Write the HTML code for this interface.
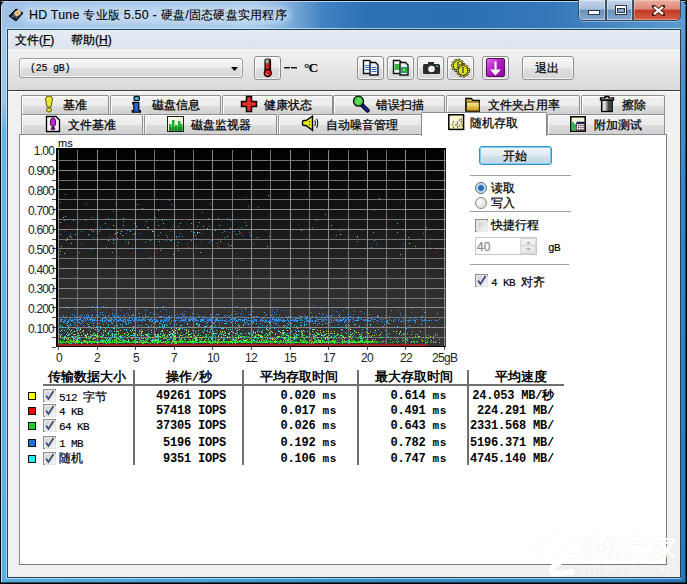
<!DOCTYPE html>
<html><head><meta charset="utf-8"><title>HD Tune</title>
<style>
*{margin:0;padding:0;box-sizing:border-box}
html,body{width:687px;height:584px;overflow:hidden;background:#101820}
body{position:relative;font-family:"Liberation Sans",sans-serif;font-size:12px;color:#000;line-height:1}
.a{position:absolute}
.t{position:absolute;white-space:nowrap;line-height:12px;-webkit-text-stroke:0.25px currentColor}
.btn{position:absolute;border:1px solid #8e8e8e;border-radius:3px;background:linear-gradient(#f6f6f6 0%,#ececec 48%,#dedede 52%,#d6d6d6 100%);box-shadow:inset 0 0 0 1px rgba(255,255,255,.7)}
.tab{position:absolute;border:1px solid #8e8f8f;border-bottom:none;border-radius:2px 2px 0 0;background:linear-gradient(#f2f2f2 0%,#ebebeb 50%,#dddddd 51%,#cfcfcf 100%);box-shadow:inset 1px 1px 0 #fff}
.tt{position:absolute;top:0;white-space:nowrap;font-size:12px;line-height:12px}
.mono{font-family:"Liberation Mono",monospace;-webkit-text-stroke:0}
.num{position:absolute;font-family:"Liberation Mono",monospace;font-weight:bold;font-size:12px;letter-spacing:-0.2px;line-height:12px;white-space:nowrap;text-align:right}
.chk{position:absolute;width:13px;height:13px;border:1px solid #8f8f8f;background:linear-gradient(135deg,#dcdcdc,#fff)}
.chk:after{content:"";position:absolute;left:1px;top:1px;width:9px;height:9px;border:1px solid #e6e6e6;background:linear-gradient(135deg,#cfcfcf,#f8f8f8)}
.sep{position:absolute;height:1px;background:#a0a0a0;box-shadow:0 1px 0 #fff}
</style></head><body>

<!-- window frame -->
<div class="a" style="left:0;top:0;width:687px;height:584px;border-radius:7px 7px 0 0;background:#000"></div>
<div class="a" style="left:1px;top:1px;width:685px;height:582px;border-radius:6px 6px 0 0;background:#4a9ad6;overflow:hidden">
 <div class="a" style="left:0;top:0;width:6px;height:582px;background:linear-gradient(#a8c8e8 0,#9cc4e6 100px,#68b0e4 130px,#5eaee2 100%)"></div>
 <div class="a" style="left:679px;top:0;width:6px;height:582px;background:linear-gradient(#6aa0d0 0,#5a92c8 60px,#3a84c0 200px,#2a78b8 100%)"></div>
 <div class="a" style="left:0;top:576px;width:685px;height:6px;background:linear-gradient(90deg,#58ace0 0,#4aa0d8 30%,#3a90c8 50%,#2a78b8 100%)"></div>
</div>
<!-- title bar colouring -->
<div class="a" style="left:2px;top:2px;width:683px;height:27px;border-radius:5px 5px 0 0;background:linear-gradient(90deg,#a0c2e6 0%,#a8c8ea 37%,#7aaad8 42.5%,#4282c2 47%,#2c72b4 53%,#2a70b2 66%,#3478b8 80%,#5c9ad2 100%)"></div>
<div class="a" style="left:22px;top:6px;width:268px;height:18px;border-radius:9px;background:rgba(215,232,250,.55);filter:blur(3px)"></div>
<div class="a" style="left:1px;top:1px;width:685px;height:1px;border-radius:6px 6px 0 0;background:rgba(255,255,255,.6)"></div>
<div class="a" style="left:1px;top:6px;width:1px;height:577px;background:rgba(200,235,255,.8)"></div>
<div class="a" style="left:1px;top:582px;width:685px;height:1px;background:rgba(0,0,0,.6)"></div>
<div class="a" style="left:685px;top:6px;width:1px;height:577px;background:rgba(0,0,20,.5)"></div>

<!-- client dark border -->
<div class="a" style="left:6px;top:28px;width:675px;height:551px;border:1px solid rgba(200,235,255,.75)"></div>
<div class="a" style="left:7px;top:29px;width:674px;height:549px;background:#25404f"></div>
<div class="a" style="left:8px;top:30px;width:672px;height:547px;background:#f0f0f0"></div>

<!-- app icon -->
<svg class="a" style="left:7px;top:7px" width="18" height="16" viewBox="0 0 18 16">
 <path d="M2 9 L9 2 L16 6 L9 14 Z" fill="#1e2a38" stroke="#0a1018" stroke-width="1"/>
 <ellipse cx="10.5" cy="6.2" rx="3.6" ry="2.6" fill="#f0c890" transform="rotate(-35 10.5 6.2)"/>
 <circle cx="10.5" cy="6.2" r="1" fill="#c08040"/>
 <path d="M5 10 L8 8 L10 11" stroke="#70809a" stroke-width="1.2" fill="none"/>
</svg>
<div class="t" style="left:29px;top:8px;font-size:12.4px;line-height:14px;color:#000;letter-spacing:0.25px;-webkit-text-stroke:0.1px">HD Tune 专业版 5.50 - 硬盘/固态硬盘实用程序</div>

<!-- caption buttons -->
<div class="a" style="left:578px;top:0;width:103px;height:21px;border:1px solid #3a4c60;border-top:none;border-radius:0 0 5px 5px;background:#3a4c60;overflow:hidden;box-shadow:0 1px 0 rgba(255,255,255,.35)">
 <div class="a" style="left:0;top:0;width:27px;height:20px;border-right:1px solid #40566c;background:linear-gradient(#c4d6ea 0%,#a8c0da 45%,#6a90ba 52%,#86aad0 100%);box-shadow:inset 0 0 0 1px rgba(255,255,255,.4)"></div>
 <div class="a" style="left:28px;top:0;width:26px;height:20px;border-right:1px solid #40566c;background:linear-gradient(#c4d6ea 0%,#a8c0da 45%,#6a90ba 52%,#86aad0 100%);box-shadow:inset 0 0 0 1px rgba(255,255,255,.4)"></div>
 <div class="a" style="left:55px;top:0;width:47px;height:20px;background:linear-gradient(#eab0a4 0%,#dc8878 45%,#c43a24 52%,#d4604a 100%);box-shadow:inset 0 0 0 1px rgba(255,220,210,.4)"></div>
 <div class="a" style="left:9px;top:10px;width:12px;height:5px;background:#fff;border:1px solid #2a3a4c"></div>
 <div class="a" style="left:36px;top:5px;width:12px;height:10px;border:1px solid #2a3a4c;background:#fff"></div>
 <div class="a" style="left:38px;top:8px;width:8px;height:5px;border:1px solid #2a3a4c;background:#8aa8c8"></div>
 <svg class="a" style="left:73px;top:5px" width="13" height="11" viewBox="0 0 13 11"><path d="M1.5 1.5 L11.5 9.5 M11.5 1.5 L1.5 9.5" stroke="#4a1a14" stroke-width="4" stroke-linecap="square"/><path d="M2 1.8 L11 9.2 M11 1.8 L2 9.2" stroke="#fff" stroke-width="2.2"/></svg>
</div>

<!-- menu bar -->
<div class="a" style="left:8px;top:30px;width:672px;height:19px;background:linear-gradient(#e6ecf4,#dbe3ee)"></div>
<div class="t" style="left:15px;top:34px">文件(<u>F</u>)</div>
<div class="t" style="left:71px;top:34px">帮助(<u>H</u>)</div>

<!-- toolbar -->
<div class="a" style="left:8px;top:49px;width:672px;height:41px;background:linear-gradient(#f2f2f2,#d9d9d9)"></div>
<div class="a" style="left:8px;top:90px;width:672px;height:1px;background:#3a3a3a"></div>
<div class="a" style="left:8px;top:91px;width:672px;height:1px;background:#fff"></div>

<!-- combo -->
<div class="btn" style="left:19px;top:58px;width:224px;height:20px;border-color:#9c9c9c"></div>
<div class="t mono" style="left:30px;top:63px;font-size:10px;letter-spacing:-0.25px;-webkit-text-stroke:0.15px">(25 gB)</div>
<svg class="a" style="left:231px;top:67px" width="8" height="5"><path d="M0 0H7L3.5 4Z" fill="#000"/></svg>

<!-- thermometer button -->
<div class="btn" style="left:254px;top:56px;width:27px;height:24px"></div>
<svg class="a" style="left:257px;top:57px" width="18" height="22" viewBox="0 0 18 22"><rect x="8" y="2" width="5.5" height="13" rx="1.5" fill="#d82828" stroke="#180000" stroke-width="1.2"/><rect x="8.6" y="2.6" width="4.3" height="3.6" rx="1" fill="#70c8a8"/><rect x="11.6" y="3" width="1.4" height="11" fill="#701010"/><circle cx="10.8" cy="16" r="3.6" fill="#d01818" stroke="#180000" stroke-width="1.2"/><path d="M9.2 16.3q.3 1.2 1.5 1.6" stroke="#fff" stroke-width="1" fill="none"/></svg>
<div class="a" style="left:284px;top:67px;width:6px;height:2px;background:linear-gradient(#111 50%,#8a8a8a 50%)"></div><div class="a" style="left:291px;top:67px;width:6px;height:2px;background:linear-gradient(#111 50%,#8a8a8a 50%)"></div>
<div class="t" style="left:304px;top:60.5px;font-family:'Liberation Serif',serif;font-size:13.5px;line-height:14px;font-weight:bold;letter-spacing:-0.8px;-webkit-text-stroke:0.1px">°C</div>

<!-- toolbar icon buttons -->
<div class="btn" style="left:357px;top:56px;width:27px;height:24px"></div>
<svg class="a" style="left:361px;top:58px" width="20" height="20" viewBox="0 0 20 20">
 <path d="M2.5 2.5h6l2 2v11h-8z" fill="#f4f8ff" stroke="#101018" stroke-width="1.4"/>
 <path d="M4 7.5h5M4 9.5h5M4 11.5h5" stroke="#3a7ad0" stroke-width="1"/>
 <path d="M9 4.5h5.5l2.5 2.5v10h-8z" fill="#e8eefa" stroke="#101018" stroke-width="1.4"/>
 <path d="M10.5 9.5h5M10.5 11.5h5M10.5 13.5h5" stroke="#3a6ac8" stroke-width="1"/>
</svg>
<div class="btn" style="left:387px;top:56px;width:27px;height:24px"></div>
<svg class="a" style="left:391px;top:58px" width="20" height="20" viewBox="0 0 20 20">
 <path d="M2.5 2.5h6l2 2v11h-8z" fill="#f4f8ff" stroke="#101018" stroke-width="1.4"/>
 <rect x="3.5" y="6" width="5" height="6" fill="#30b840"/>
 <path d="M9 4.5h5.5l2.5 2.5v10h-8z" fill="#e8eefa" stroke="#101018" stroke-width="1.4"/>
 <rect x="10" y="9" width="6" height="6" fill="#20a860"/>
 <circle cx="13" cy="12" r="1.2" fill="#a0e020"/>
</svg>
<div class="btn" style="left:417px;top:56px;width:27px;height:24px"></div>
<svg class="a" style="left:422px;top:59px" width="19" height="18" viewBox="0 0 19 18">
 <rect x="1" y="5" width="17" height="10" rx="1.5" fill="#2a2a2a"/>
 <rect x="6" y="3" width="6" height="3" fill="#2a2a2a"/>
 <circle cx="9.5" cy="10" r="3.3" fill="#f0f0f0"/>
 <rect x="14" y="6.5" width="2" height="1.5" fill="#40c080"/>
</svg>
<div class="btn" style="left:447px;top:56px;width:27px;height:24px"></div>
<svg class="a" style="left:450px;top:57px" width="22" height="22" viewBox="0 0 22 22"><circle cx="8" cy="8.5" r="5.2" fill="#1a1a00"/><circle cx="8" cy="8.5" r="5.6" fill="none" stroke="#1a1a00" stroke-width="2.6" stroke-dasharray="2.2 1"/><circle cx="8" cy="8.5" r="5.6" fill="none" stroke="#e4e820" stroke-width="1.3" stroke-dasharray="1.4 1.8" stroke-dashoffset="-.4"/><circle cx="8" cy="8.5" r="4.4" fill="#e0e420"/><circle cx="13" cy="13.5" r="5.2" fill="#1a1a00"/><circle cx="13" cy="13.5" r="5.6" fill="none" stroke="#1a1a00" stroke-width="2.6" stroke-dasharray="2.2 1"/><circle cx="13" cy="13.5" r="5.6" fill="none" stroke="#e4e820" stroke-width="1.3" stroke-dasharray="1.4 1.8" stroke-dashoffset="-.4"/><circle cx="13" cy="13.5" r="4.4" fill="#e0e420"/><path d="M8 5v6M13 10v6" stroke="#404010" stroke-width="2"/><path d="M8 5.5v5M13 10.5v5" stroke="#d0d0b0" stroke-width=".8"/></svg>
<div class="btn" style="left:482px;top:56px;width:27px;height:24px"></div>
<div class="a" style="left:486px;top:58px;width:19px;height:19px;border-radius:2px;background:linear-gradient(135deg,#e070e8 0%,#b020c0 45%,#8a0898 100%);border:1px solid #600868"></div>
<svg class="a" style="left:487px;top:59px" width="17" height="18" viewBox="0 0 17 18"><path d="M8.5 2.5v8" stroke="#fff" stroke-width="2.2"/><path d="M3 10.5h11l-5.5 6z" fill="#fff"/></svg>
<div class="btn" style="left:522px;top:56px;width:52px;height:24px"></div>
<div class="t" style="left:535px;top:62px">退出</div>

<!-- tabs row 1 -->
<div class="tab" style="left:21px;top:95px;width:88px;height:20px"></div>
<div class="tab" style="left:110px;top:95px;width:111px;height:20px"></div>
<div class="tab" style="left:222px;top:95px;width:111px;height:20px"></div>
<div class="tab" style="left:333px;top:95px;width:112px;height:20px"></div>
<div class="tab" style="left:446px;top:95px;width:134px;height:20px"></div>
<div class="tab" style="left:581px;top:95px;width:84px;height:20px"></div>
<div class="t" style="left:63px;top:99px">基准</div>
<div class="t" style="left:152px;top:99px">磁盘信息</div>
<div class="t" style="left:264px;top:99px">健康状态</div>
<div class="t" style="left:376px;top:99px">错误扫描</div>
<div class="t" style="left:488px;top:99px">文件夹占用率</div>
<div class="t" style="left:622px;top:99px">擦除</div>
<!-- row1 icons -->
<svg class="a" style="left:44px;top:96px" width="10" height="17" viewBox="0 0 10 17"><path d="M1.5 3a3.5 3 0 0 1 7 0l-1.5 8h-4z" fill="#e8e830" stroke="#5a5a10"/><ellipse cx="5" cy="14" rx="2.5" ry="2" fill="#e8e830" stroke="#5a5a10"/></svg>
<svg class="a" style="left:131px;top:95px" width="11" height="18" viewBox="0 0 11 18"><rect x="3" y="1.3" width="5.5" height="4.2" rx="1.6" fill="#38b0e0" stroke="#000" stroke-width="1.2"/><path d="M1.8 7.3h6v8.2h1.6v1.6h-8.2v-1.6h1.6v-6.6h-1z" fill="#2a62e0" stroke="#000" stroke-width="1.2"/></svg>
<svg class="a" style="left:240px;top:95px" width="18" height="18" viewBox="0 0 18 18"><path d="M6.5 1.5h5v5h5v5h-5v5h-5v-5h-5v-5h5z" fill="#e82a2a" stroke="#100000" stroke-width="1.5"/></svg>
<svg class="a" style="left:352px;top:95px" width="18" height="18" viewBox="0 0 18 18"><path d="M9.5 9.5l6 6" stroke="#000" stroke-width="4.2" stroke-linecap="round"/><path d="M9.5 9.5l6 6" stroke="#2020b0" stroke-width="2.4" stroke-linecap="round"/><circle cx="6.5" cy="6.2" r="5" fill="#48d048" stroke="#000" stroke-width="1.3"/><path d="M4 7.5l4-4M5.5 9l4-4" stroke="#b0f0b0" stroke-width=".8"/></svg>
<svg class="a" style="left:464px;top:95px" width="18" height="18" viewBox="0 0 18 18"><defs><linearGradient id="fg" x1="0" y1="0" x2="0" y2="1"><stop offset="0" stop-color="#fff0a0"/><stop offset="1" stop-color="#c89810"/></linearGradient></defs><path d="M1.8 3.5h5.5l1.5 1.8h6.5v10.8h-13.5z" fill="#e0b830" stroke="#000" stroke-width="1.3"/><path d="M2.5 7h12.8v9h-12.8z" fill="url(#fg)" stroke="#302000" stroke-width=".8"/></svg>
<svg class="a" style="left:599px;top:95px" width="16" height="18" viewBox="0 0 16 18"><defs><linearGradient id="tg" x1="0" y1="0" x2="1" y2="0"><stop offset="0" stop-color="#808080"/><stop offset=".25" stop-color="#f0f0f0"/><stop offset=".45" stop-color="#a0a0a0"/><stop offset=".72" stop-color="#303030"/><stop offset="1" stop-color="#707070"/></linearGradient></defs><path d="M1.5 2.8h4.5v-1.3h3.8v1.3h4.7v2.4h-13z" fill="#c8c8c8" stroke="#000" stroke-width="1.3"/><rect x="2.6" y="5.2" width="10.6" height="11.3" fill="url(#tg)" stroke="#000" stroke-width="1.3"/></svg>

<!-- tabs row 2 -->
<div class="tab" style="left:21px;top:114px;width:122px;height:21px"></div>
<div class="tab" style="left:144px;top:114px;width:133px;height:21px"></div>
<div class="tab" style="left:278px;top:114px;width:144px;height:21px"></div>
<div class="tab" style="left:547px;top:114px;width:118px;height:21px"></div>
<div class="t" style="left:68px;top:119px">文件基准</div>
<div class="t" style="left:191px;top:119px">磁盘监视器</div>
<div class="t" style="left:326px;top:119px">自动噪音管理</div>
<div class="t" style="left:594px;top:119px">附加测试</div>
<svg class="a" style="left:45px;top:115px" width="16" height="18" viewBox="0 0 16 18"><path d="M1.5 1.5h9.5l3.5 3.5v11.5h-13z" fill="#f4f0f4" stroke="#000" stroke-width="1.3"/><ellipse cx="8" cy="7.3" rx="2.6" ry="4.3" fill="#c420d8" stroke="#200020" stroke-width=".9"/><ellipse cx="8" cy="13.6" rx="1.9" ry="1.2" fill="#9010b0" stroke="#200020" stroke-width=".8"/></svg>
<svg class="a" style="left:167px;top:116px" width="17" height="16" viewBox="0 0 17 16"><defs><linearGradient id="mg" x1="0" y1="0" x2="1" y2="1"><stop offset="0" stop-color="#fff"/><stop offset="1" stop-color="#e8e0b0"/></linearGradient></defs><rect x=".5" y=".5" width="16" height="15" fill="url(#mg)" stroke="#202020"/><path d="M2 15V8h2.5v7zM5 15V4h2.5v11zM8 15V9h2.5v6zM11 15V5h2.5v10zM13.5 15V8h2v7z" fill="#18b030"/><path d="M2 15V11h13.5v4z" fill="#0a8020" opacity=".6"/></svg>
<svg class="a" style="left:301px;top:115px" width="19" height="17" viewBox="0 0 19 17"><path d="M1.5 7Q1.5 5.5 3 5.5L5 5.5L11.5 1.2V15.3L5 10.5L3 10.5Q1.5 10.5 1.5 9Z" fill="#ece828" stroke="#000" stroke-width="1.4"/><path d="M8.5 6.5v1M8.5 9v1" stroke="#000"/><path d="M13.8 5.5Q15.2 8.2 13.8 11M15.8 3.8Q18 8.2 15.8 12.8" stroke="#000" stroke-width="1" fill="none"/></svg>
<svg class="a" style="left:569px;top:115px" width="18" height="18" viewBox="0 0 18 18"><rect x="1.8" y="1.8" width="14.4" height="14.4" fill="#f4f8d8" stroke="#000" stroke-width="1.5"/><path d="M2.5 15.5V7h2.5v2h2.5v6.5z" fill="#30b050"/><rect x="7.5" y="6.8" width="8.2" height="2" fill="#0a0a60"/><rect x="7.5" y="8.8" width="8.2" height="6.8" fill="#f4e8f0" stroke="#000" stroke-width=".6"/><g fill="#503030"><rect x="9" y="10" width="1.2" height="1.2"/><rect x="11.2" y="10" width="1.2" height="1.2"/><rect x="13.4" y="10" width="1.2" height="1.2"/><rect x="9" y="12" width="1.2" height="1.2"/><rect x="11.2" y="12" width="1.2" height="1.2"/><rect x="13.4" y="12" width="1.2" height="1.2"/><rect x="9" y="14" width="1.2" height="1.2"/><rect x="11.2" y="14" width="1.2" height="1.2"/><rect x="13.4" y="14" width="1.2" height="1.2"/></g></svg>

<!-- panel -->
<div class="a" style="left:19px;top:134px;width:648px;height:431px;background:#fff;border:1px solid #898c95;border-right-color:#7a7a7a;border-bottom-color:#7a7a7a"></div>

<!-- selected tab -->
<div class="a" style="left:421px;top:112px;width:126px;height:24px;background:#fff;border:1px solid #898c95;border-bottom:none;border-radius:2px 2px 0 0"></div>
<svg class="a" style="left:447px;top:113px" width="18" height="18" viewBox="0 0 18 18"><defs><linearGradient id="yg" x1="0" y1="0" x2="1" y2="1"><stop offset="0" stop-color="#fffce8"/><stop offset="1" stop-color="#f4f0a8"/></linearGradient></defs><rect x="1.8" y="1.8" width="14.8" height="14.6" fill="url(#yg)" stroke="#000" stroke-width="1.5"/><g fill="#303080"><circle cx="6.5" cy="9" r=".8"/><circle cx="9" cy="12" r=".8"/><circle cx="12.5" cy="7" r=".8"/><circle cx="14.5" cy="8.5" r=".8"/></g><g fill="#705020"><circle cx="5.5" cy="11.5" r=".8"/><circle cx="6.5" cy="14" r=".8"/><circle cx="10.5" cy="9" r=".8"/><circle cx="10.5" cy="11" r=".8"/><circle cx="10.5" cy="14" r=".8"/><circle cx="12.5" cy="13" r=".8"/><circle cx="14.5" cy="11" r=".8"/><circle cx="15.5" cy="13" r=".8"/><circle cx="14.5" cy="6" r=".8"/></g></svg>
<div class="t" style="left:470px;top:117px">随机存取</div>

<!-- chart -->
<svg class="a" style="left:0;top:0" width="687" height="584"><defs><linearGradient id="cg" x1="0" y1="0" x2="0" y2="1"><stop offset="0" stop-color="#000"/><stop offset="0.12" stop-color="#060606"/><stop offset="0.7" stop-color="#2e2e2e"/><stop offset="1" stop-color="#383838"/></linearGradient></defs><rect x="56" y="148" width="390" height="199" fill="url(#cg)"/><path stroke="#747474" stroke-width="1" fill="none" d="M77.5 150 V347 M116.5 150 V347 M154.5 150 V347 M193.5 150 V347 M232.5 150 V347 M270.5 150 V347 M309.5 150 V347 M348.5 150 V347 M386.5 150 V347 M425.5 150 V347 M56 337.5 H446 M56 317.5 H446 M56 298.5 H446 M56 278.5 H446 M56 258.5 H446 M56 239.5 H446 M56 219.5 H446 M56 199.5 H446 M56 180.5 H446 M56 160.5 H446"/><path stroke="#8a8a8a" stroke-width="1" fill="none" d="M58.5 150 V347 M97.5 150 V347 M135.5 150 V347 M174.5 150 V347 M212.5 150 V347 M251.5 150 V347 M290.5 150 V347 M328.5 150 V347 M367.5 150 V347 M405.5 150 V347 M444.5 150 V347 M56 327.5 H446 M56 307.5 H446 M56 288.5 H446 M56 268.5 H446 M56 248.5 H446 M56 229.5 H446 M56 209.5 H446 M56 189.5 H446 M56 170.5 H446"/><path stroke="#404a60" stroke-width="1" fill="none" d="M52 347.5 H56 M52 337.5 H56 M52 327.5 H56 M52 317.5 H56 M52 307.5 H56 M52 298.5 H56 M52 288.5 H56 M52 278.5 H56 M52 268.5 H56 M52 258.5 H56 M52 248.5 H56 M52 239.5 H56 M52 229.5 H56 M52 219.5 H56 M52 209.5 H56 M52 199.5 H56 M52 189.5 H56 M52 180.5 H56 M52 170.5 H56 M52 160.5 H56"/><path stroke="#505050" stroke-width="1" fill="none" d="M58.5 347 V350 M97.5 347 V350 M135.5 347 V350 M174.5 347 V350 M212.5 347 V350 M251.5 347 V350 M290.5 347 V350 M328.5 347 V350 M367.5 347 V350 M405.5 347 V350 M444.5 347 V350"/><path fill="#2a8ce0" d="M182 236h1v1h-1zM81 231h1v1h-1zM210 203h1v1h-1zM232 223h1v1h-1zM167 237h1v1h-1zM234 231h1v1h-1zM153 231h1v1h-1zM230 220h1v1h-1zM126 233h1v1h-1zM208 218h1v1h-1zM374 210h1v1h-1zM145 242h1v1h-1zM241 227h1v1h-1zM123 221h1v1h-1zM224 231h1v1h-1zM150 240h1v1h-1zM258 207h1v1h-1zM239 231h1v1h-1zM142 248h1v1h-1zM376 244h1v1h-1zM429 242h1v1h-1zM108 218h1v1h-1zM86 203h1v1h-1zM100 227h1v1h-1zM249 232h1v1h-1zM191 231h1v1h-1zM151 239h1v1h-1zM250 235h1v1h-1zM211 240h1v1h-1zM70 234h1v1h-1zM336 235h1v1h-1zM169 200h1v1h-1zM113 211h1v1h-1zM174 234h1v1h-1zM222 229h1v1h-1zM160 232h1v1h-1zM412 229h1v1h-1zM172 226h1v1h-1zM248 206h1v1h-1zM157 221h1v1h-1zM211 248h1v1h-1zM59 254h1v1h-1zM269 236h1v1h-1zM174 234h1v1h-1zM85 220h1v1h-1zM171 240h1v1h-1zM129 230h1v1h-1zM201 233h1v1h-1zM423 233h1v1h-1zM194 229h1v1h-1zM70 258h1v1h-1zM180 233h1v1h-1zM134 223h1v1h-1zM229 246h1v1h-1zM312 227h1v1h-1zM209 226h1v1h-1zM99 231h1v1h-1zM129 229h1v1h-1zM93 237h1v1h-1zM217 243h1v1h-1zM405 241h1v1h-1zM166 240h1v1h-1zM242 235h1v1h-1zM374 240h1v1h-1zM127 230h1v1h-1zM227 218h1v1h-1zM253 243h1v1h-1zM138 248h1v1h-1zM196 246h1v1h-1zM196 238h1v1h-1zM109 237h1v1h-1zM136 239h1v1h-1zM228 244h1v1h-1zM403 244h1v1h-1zM125 241h1v1h-1zM426 227h1v1h-1zM158 235h1v1h-1zM176 237h1v1h-1zM69 236h1v1h-1zM339 230h1v1h-1zM398 219h1v1h-1zM191 240h1v1h-1zM371 247h1v1h-1zM140 233h1v1h-1zM107 228h1v1h-1zM117 238h1v1h-1zM224 237h1v1h-1zM249 239h1v1h-1zM222 232h1v1h-1zM128 241h1v1h-1zM105 219h1v1h-1zM171 204h1v1h-1zM202 212h1v1h-1zM64 220h1v1h-1zM113 238h1v1h-1zM159 229h1v1h-1zM239 233h1v1h-1zM162 220h1v1h-1zM357 237h1v1h-1zM318 239h1v1h-1zM60 202h1v1h-1zM91 249h1v1h-1zM89 235h1v1h-1zM81 243h1v1h-1zM170 219h1v1h-1zM176 236h1v1h-1zM163 228h1v1h-1zM92 217h1v1h-1z"/><path fill="#30c8e0" d="M93 231h1v1h-1zM113 240h1v1h-1zM178 242h1v1h-1zM178 226h1v1h-1zM60 222h1v1h-1zM197 226h1v1h-1zM197 233h1v1h-1zM209 242h1v1h-1zM268 195h1v1h-1zM219 225h1v1h-1zM227 236h1v1h-1zM180 223h1v1h-1zM325 214h1v1h-1zM154 235h1v1h-1zM194 232h1v1h-1zM207 228h1v1h-1zM75 234h1v1h-1zM60 234h1v1h-1zM88 234h1v1h-1zM63 217h1v1h-1zM230 228h1v1h-1zM147 227h1v1h-1zM379 198h1v1h-1zM67 239h1v1h-1zM67 238h1v1h-1zM71 243h1v1h-1zM91 230h1v1h-1zM199 232h1v1h-1zM136 226h1v1h-1zM97 217h1v1h-1zM134 233h1v1h-1zM120 233h1v1h-1zM105 223h1v1h-1zM73 220h1v1h-1zM148 227h1v1h-1zM408 237h1v1h-1zM123 225h1v1h-1zM195 235h1v1h-1zM159 241h1v1h-1zM331 225h1v1h-1zM113 219h1v1h-1zM97 233h1v1h-1zM66 240h1v1h-1zM199 222h1v1h-1zM301 230h1v1h-1zM397 232h1v1h-1zM203 226h1v1h-1zM191 223h1v1h-1zM123 218h1v1h-1zM257 237h1v1h-1zM71 237h1v1h-1zM97 231h1v1h-1zM215 230h1v1h-1zM163 223h1v1h-1zM193 233h1v1h-1zM152 231h1v1h-1zM357 236h1v1h-1zM117 232h1v1h-1zM378 239h1v1h-1zM218 218h1v1h-1zM170 240h1v1h-1zM179 236h1v1h-1zM65 216h1v1h-1zM130 231h1v1h-1zM236 234h1v1h-1z"/><path fill="#c0c040" d="M267 246h1v1h-1zM200 252h1v1h-1zM178 250h1v1h-1zM231 245h1v1h-1zM60 251h1v1h-1zM231 245h1v1h-1zM61 246h1v1h-1zM400 254h1v1h-1zM64 253h1v1h-1z"/><path fill="#d0d040" d="M152 231h1v1h-1zM108 240h1v1h-1zM121 231h1v1h-1zM122 235h1v1h-1zM113 225h1v1h-1zM409 243h1v1h-1zM158 210h1v1h-1zM340 234h1v1h-1zM115 233h1v1h-1zM220 241h1v1h-1zM197 232h1v1h-1zM128 243h1v1h-1z"/><path fill="#a03030" d="M432 248h1v1h-1zM217 246h1v1h-1zM84 260h1v1h-1zM115 203h1v1h-1zM236 253h1v1h-1zM265 230h1v1h-1zM184 219h1v1h-1zM229 232h1v1h-1zM241 232h1v1h-1zM157 252h1v1h-1zM400 201h1v1h-1zM188 247h1v1h-1zM84 245h1v1h-1zM65 231h1v1h-1zM77 249h1v1h-1zM132 252h1v1h-1zM187 244h1v1h-1zM106 247h1v1h-1zM144 225h1v1h-1zM240 233h1v1h-1zM134 234h1v1h-1zM114 234h1v1h-1zM156 249h1v1h-1zM68 226h1v1h-1zM436 252h1v1h-1zM170 231h1v1h-1zM200 241h1v1h-1zM245 197h1v1h-1zM219 247h1v1h-1zM132 234h1v1h-1zM119 256h1v1h-1zM342 231h1v1h-1zM355 236h1v1h-1zM194 248h1v1h-1zM97 235h1v1h-1zM69 243h1v1h-1zM174 238h1v1h-1zM97 246h1v1h-1zM218 238h1v1h-1z"/><path fill="#40c060" d="M316 220h1v1h-1zM158 225h1v1h-1zM357 241h1v1h-1zM150 240h1v1h-1zM65 194h1v1h-1zM415 246h1v1h-1zM112 252h1v1h-1zM241 260h1v1h-1zM100 248h1v1h-1zM373 232h1v1h-1zM113 243h1v1h-1zM160 250h1v1h-1zM150 257h1v1h-1zM137 204h1v1h-1zM70 236h1v1h-1zM146 221h1v1h-1zM245 222h1v1h-1zM142 208h1v1h-1zM246 225h1v1h-1zM173 254h1v1h-1zM79 252h1v1h-1zM155 217h1v1h-1zM166 235h1v1h-1zM397 223h1v1h-1z"/><path fill="#30c0d0" d="M177 245h1v1h-1zM154 256h1v1h-1zM91 248h1v1h-1z"/><path fill="#2890e0" d="M240 320h1v1h-1zM358 319h1v1h-1zM80 315h1v1h-1zM231 317h1v1h-1zM299 315h1v1h-1zM104 318h1v1h-1zM96 326h1v1h-1zM113 320h1v1h-1zM253 316h1v1h-1zM322 307h1v1h-1zM215 320h1v1h-1zM153 326h1v1h-1zM105 320h1v1h-1zM66 316h1v1h-1zM192 320h1v1h-1zM355 320h1v1h-1zM381 318h1v1h-1zM72 320h1v1h-1zM224 320h1v1h-1zM191 318h1v1h-1zM278 319h1v1h-1zM378 318h1v1h-1zM63 322h1v1h-1zM257 316h1v1h-1zM112 319h1v1h-1zM305 316h1v1h-1zM156 320h1v1h-1zM244 316h1v1h-1zM373 319h1v1h-1zM128 314h1v1h-1zM175 320h1v1h-1zM210 320h1v1h-1zM306 317h1v1h-1zM125 320h1v1h-1zM251 319h1v1h-1zM84 318h1v1h-1zM274 321h1v1h-1zM166 318h1v1h-1zM245 309h1v1h-1zM314 321h1v1h-1zM102 320h1v1h-1zM245 319h1v1h-1zM97 322h1v1h-1zM203 320h1v1h-1zM247 322h1v1h-1zM203 318h1v1h-1zM295 320h1v1h-1zM273 323h1v1h-1zM365 320h1v1h-1zM370 320h1v1h-1zM364 313h1v1h-1zM270 318h1v1h-1zM323 319h1v1h-1zM139 318h1v1h-1zM278 319h1v1h-1zM192 319h1v1h-1zM250 317h1v1h-1zM228 320h1v1h-1zM333 317h1v1h-1zM87 314h1v1h-1zM378 321h1v1h-1zM86 318h1v1h-1zM139 319h1v1h-1zM391 320h1v1h-1zM139 319h1v1h-1zM141 320h1v1h-1zM365 324h1v1h-1zM337 320h1v1h-1zM161 319h1v1h-1zM266 314h1v1h-1zM405 319h1v1h-1zM194 321h1v1h-1zM86 315h1v1h-1zM117 321h1v1h-1zM276 319h1v1h-1zM386 320h1v1h-1zM294 321h1v1h-1zM411 312h1v1h-1zM129 316h1v1h-1zM175 321h1v1h-1zM135 317h1v1h-1zM78 320h1v1h-1zM248 318h1v1h-1zM217 320h1v1h-1zM174 320h1v1h-1zM328 320h1v1h-1zM301 318h1v1h-1zM315 320h1v1h-1zM283 310h1v1h-1zM343 318h1v1h-1zM208 319h1v1h-1zM373 321h1v1h-1zM311 321h1v1h-1zM90 319h1v1h-1zM104 320h1v1h-1zM185 320h1v1h-1zM232 320h1v1h-1zM72 321h1v1h-1zM114 316h1v1h-1zM246 321h1v1h-1zM135 320h1v1h-1zM355 317h1v1h-1zM163 316h1v1h-1zM383 319h1v1h-1zM354 311h1v1h-1zM330 322h1v1h-1zM292 320h1v1h-1zM196 319h1v1h-1zM143 318h1v1h-1zM145 310h1v1h-1zM333 318h1v1h-1zM271 317h1v1h-1zM244 321h1v1h-1zM136 309h1v1h-1zM95 317h1v1h-1zM93 320h1v1h-1zM127 320h1v1h-1zM227 315h1v1h-1zM261 320h1v1h-1zM308 320h1v1h-1zM334 317h1v1h-1zM70 319h1v1h-1zM242 320h1v1h-1zM358 317h1v1h-1zM307 320h1v1h-1zM141 320h1v1h-1zM149 321h1v1h-1zM307 320h1v1h-1zM401 320h1v1h-1zM107 319h1v1h-1zM300 323h1v1h-1zM283 321h1v1h-1zM238 320h1v1h-1zM185 319h1v1h-1zM93 318h1v1h-1zM345 320h1v1h-1zM414 317h1v1h-1zM293 319h1v1h-1zM108 321h1v1h-1zM210 319h1v1h-1zM234 319h1v1h-1zM230 318h1v1h-1zM83 321h1v1h-1zM369 314h1v1h-1zM310 320h1v1h-1zM290 320h1v1h-1zM371 319h1v1h-1zM234 311h1v1h-1zM422 316h1v1h-1zM222 318h1v1h-1zM113 314h1v1h-1zM218 320h1v1h-1zM297 320h1v1h-1zM103 315h1v1h-1zM91 321h1v1h-1zM328 320h1v1h-1zM141 325h1v1h-1zM242 320h1v1h-1zM178 320h1v1h-1zM273 317h1v1h-1zM345 320h1v1h-1zM317 319h1v1h-1zM101 320h1v1h-1zM97 317h1v1h-1zM102 321h1v1h-1zM123 321h1v1h-1zM266 326h1v1h-1zM242 321h1v1h-1zM189 320h1v1h-1zM75 322h1v1h-1zM135 322h1v1h-1zM199 316h1v1h-1zM393 321h1v1h-1zM196 320h1v1h-1zM369 321h1v1h-1zM331 321h1v1h-1zM78 319h1v1h-1zM226 319h1v1h-1zM323 320h1v1h-1zM234 318h1v1h-1zM358 320h1v1h-1zM276 320h1v1h-1zM91 321h1v1h-1zM113 321h1v1h-1zM77 320h1v1h-1zM329 325h1v1h-1zM251 319h1v1h-1zM169 321h1v1h-1zM188 320h1v1h-1zM110 320h1v1h-1zM208 321h1v1h-1zM241 316h1v1h-1zM120 310h1v1h-1zM287 318h1v1h-1zM77 316h1v1h-1zM280 320h1v1h-1zM103 306h1v1h-1zM421 319h1v1h-1zM244 320h1v1h-1zM401 320h1v1h-1zM382 321h1v1h-1zM230 322h1v1h-1zM176 317h1v1h-1zM117 320h1v1h-1zM182 320h1v1h-1zM295 320h1v1h-1zM173 320h1v1h-1zM416 319h1v1h-1zM336 319h1v1h-1zM154 319h1v1h-1zM221 320h1v1h-1zM255 320h1v1h-1zM131 315h1v1h-1zM365 320h1v1h-1zM173 320h1v1h-1zM65 321h1v1h-1zM164 319h1v1h-1zM104 320h1v1h-1zM277 321h1v1h-1zM256 320h1v1h-1zM129 317h1v1h-1zM415 317h1v1h-1zM156 320h1v1h-1zM228 316h1v1h-1zM212 319h1v1h-1zM403 322h1v1h-1zM318 319h1v1h-1zM254 319h1v1h-1zM139 313h1v1h-1zM132 317h1v1h-1zM156 321h1v1h-1zM357 318h1v1h-1zM91 319h1v1h-1zM153 319h1v1h-1zM288 321h1v1h-1zM350 319h1v1h-1zM66 319h1v1h-1zM188 320h1v1h-1zM395 321h1v1h-1zM230 319h1v1h-1zM298 318h1v1h-1zM60 321h1v1h-1zM319 319h1v1h-1zM271 321h1v1h-1zM238 319h1v1h-1zM283 319h1v1h-1zM98 316h1v1h-1zM155 321h1v1h-1zM285 320h1v1h-1zM230 320h1v1h-1zM415 321h1v1h-1zM331 320h1v1h-1zM168 317h1v1h-1zM225 323h1v1h-1zM342 319h1v1h-1zM342 320h1v1h-1zM373 321h1v1h-1zM414 320h1v1h-1zM142 320h1v1h-1zM243 317h1v1h-1zM196 320h1v1h-1zM165 319h1v1h-1zM328 306h1v1h-1zM428 320h1v1h-1zM278 321h1v1h-1zM401 321h1v1h-1zM237 316h1v1h-1zM109 320h1v1h-1zM85 321h1v1h-1zM239 325h1v1h-1zM148 316h1v1h-1zM102 317h1v1h-1zM235 318h1v1h-1zM281 320h1v1h-1zM150 320h1v1h-1zM153 314h1v1h-1zM161 320h1v1h-1zM171 321h1v1h-1zM316 320h1v1h-1zM248 320h1v1h-1zM164 321h1v1h-1zM169 321h1v1h-1zM207 322h1v1h-1zM108 320h1v1h-1zM384 321h1v1h-1zM327 323h1v1h-1zM219 320h1v1h-1zM235 314h1v1h-1zM340 321h1v1h-1zM103 318h1v1h-1zM387 322h1v1h-1zM68 308h1v1h-1zM295 319h1v1h-1zM136 319h1v1h-1zM219 320h1v1h-1zM158 307h1v1h-1zM261 320h1v1h-1zM352 321h1v1h-1zM256 320h1v1h-1zM63 316h1v1h-1zM345 320h1v1h-1zM186 321h1v1h-1zM120 318h1v1h-1zM326 320h1v1h-1zM312 320h1v1h-1zM358 318h1v1h-1zM160 320h1v1h-1zM345 321h1v1h-1zM170 318h1v1h-1zM168 319h1v1h-1zM106 308h1v1h-1zM287 317h1v1h-1zM281 318h1v1h-1zM104 321h1v1h-1zM235 319h1v1h-1zM365 320h1v1h-1zM346 319h1v1h-1zM295 327h1v1h-1zM131 318h1v1h-1zM365 324h1v1h-1zM385 315h1v1h-1z"/><path fill="#3a8cf0" d="M197 320h1v1h-1zM155 319h1v1h-1zM128 320h1v1h-1zM182 321h1v1h-1zM398 310h1v1h-1zM412 308h1v1h-1zM113 320h1v1h-1zM226 321h1v1h-1zM118 320h1v1h-1zM224 320h1v1h-1zM337 321h1v1h-1zM182 316h1v1h-1zM91 318h1v1h-1zM161 321h1v1h-1zM280 320h1v1h-1zM259 321h1v1h-1zM151 318h1v1h-1zM69 319h1v1h-1zM166 310h1v1h-1zM193 319h1v1h-1zM330 319h1v1h-1zM223 320h1v1h-1zM217 314h1v1h-1zM252 321h1v1h-1zM125 321h1v1h-1zM266 321h1v1h-1zM324 318h1v1h-1zM186 318h1v1h-1zM287 319h1v1h-1zM298 318h1v1h-1zM343 319h1v1h-1zM171 315h1v1h-1zM274 319h1v1h-1zM93 320h1v1h-1zM398 320h1v1h-1zM275 320h1v1h-1zM291 316h1v1h-1zM173 327h1v1h-1zM143 318h1v1h-1zM210 320h1v1h-1zM111 320h1v1h-1zM328 314h1v1h-1zM244 320h1v1h-1zM145 314h1v1h-1zM174 321h1v1h-1zM80 318h1v1h-1zM220 317h1v1h-1zM97 324h1v1h-1zM81 316h1v1h-1zM157 314h1v1h-1zM422 320h1v1h-1zM116 321h1v1h-1zM104 320h1v1h-1zM423 309h1v1h-1zM211 320h1v1h-1zM333 321h1v1h-1zM439 319h1v1h-1zM323 320h1v1h-1zM61 321h1v1h-1zM290 320h1v1h-1zM110 321h1v1h-1zM72 319h1v1h-1zM77 320h1v1h-1zM216 319h1v1h-1zM109 321h1v1h-1zM328 320h1v1h-1zM135 321h1v1h-1zM112 309h1v1h-1zM78 320h1v1h-1zM74 321h1v1h-1zM263 320h1v1h-1zM275 319h1v1h-1zM64 320h1v1h-1zM358 316h1v1h-1zM116 319h1v1h-1zM215 319h1v1h-1zM130 320h1v1h-1zM399 319h1v1h-1zM207 325h1v1h-1zM316 318h1v1h-1zM182 319h1v1h-1zM193 320h1v1h-1zM211 321h1v1h-1zM84 317h1v1h-1zM277 310h1v1h-1zM101 319h1v1h-1zM131 320h1v1h-1zM166 320h1v1h-1zM360 318h1v1h-1zM138 319h1v1h-1zM296 320h1v1h-1zM61 320h1v1h-1zM349 317h1v1h-1zM232 319h1v1h-1zM381 321h1v1h-1zM188 320h1v1h-1zM331 319h1v1h-1zM322 319h1v1h-1zM189 319h1v1h-1zM387 321h1v1h-1zM119 318h1v1h-1zM307 320h1v1h-1zM415 318h1v1h-1zM122 326h1v1h-1zM237 316h1v1h-1zM81 320h1v1h-1zM304 321h1v1h-1zM341 320h1v1h-1zM281 320h1v1h-1zM135 320h1v1h-1zM71 320h1v1h-1zM163 306h1v1h-1zM280 320h1v1h-1zM220 317h1v1h-1zM132 315h1v1h-1zM326 315h1v1h-1zM315 321h1v1h-1zM423 320h1v1h-1zM178 318h1v1h-1zM209 318h1v1h-1zM70 325h1v1h-1zM60 320h1v1h-1zM66 306h1v1h-1zM147 319h1v1h-1zM92 315h1v1h-1zM225 316h1v1h-1zM92 320h1v1h-1zM145 318h1v1h-1zM124 319h1v1h-1zM347 318h1v1h-1zM370 320h1v1h-1zM190 308h1v1h-1zM217 319h1v1h-1zM308 320h1v1h-1zM313 305h1v1h-1zM331 320h1v1h-1zM79 316h1v1h-1zM344 321h1v1h-1zM194 321h1v1h-1zM132 319h1v1h-1zM238 319h1v1h-1zM295 318h1v1h-1zM67 321h1v1h-1zM410 318h1v1h-1zM182 320h1v1h-1zM231 319h1v1h-1zM380 319h1v1h-1zM276 318h1v1h-1zM179 321h1v1h-1zM321 318h1v1h-1zM376 320h1v1h-1zM304 319h1v1h-1zM120 319h1v1h-1zM270 317h1v1h-1zM280 319h1v1h-1zM242 319h1v1h-1zM196 320h1v1h-1zM192 317h1v1h-1zM307 316h1v1h-1zM195 320h1v1h-1zM231 314h1v1h-1zM248 314h1v1h-1zM167 321h1v1h-1zM85 319h1v1h-1zM107 320h1v1h-1zM133 320h1v1h-1zM232 320h1v1h-1zM365 319h1v1h-1zM219 323h1v1h-1zM193 315h1v1h-1zM185 318h1v1h-1zM435 320h1v1h-1zM287 323h1v1h-1zM177 314h1v1h-1zM102 319h1v1h-1zM318 321h1v1h-1zM84 320h1v1h-1zM326 317h1v1h-1zM176 320h1v1h-1zM314 321h1v1h-1zM89 318h1v1h-1zM145 315h1v1h-1zM142 316h1v1h-1zM211 318h1v1h-1zM258 317h1v1h-1zM174 321h1v1h-1zM131 320h1v1h-1zM180 320h1v1h-1zM97 306h1v1h-1zM416 319h1v1h-1zM81 323h1v1h-1zM163 309h1v1h-1zM157 320h1v1h-1zM238 320h1v1h-1zM67 321h1v1h-1zM349 320h1v1h-1zM175 321h1v1h-1zM201 321h1v1h-1zM156 319h1v1h-1zM387 320h1v1h-1zM211 319h1v1h-1zM212 320h1v1h-1zM378 316h1v1h-1zM160 320h1v1h-1zM123 316h1v1h-1zM90 307h1v1h-1zM94 319h1v1h-1zM68 320h1v1h-1zM230 315h1v1h-1zM367 319h1v1h-1zM98 316h1v1h-1zM437 320h1v1h-1zM115 318h1v1h-1zM70 318h1v1h-1zM343 310h1v1h-1zM280 319h1v1h-1zM431 320h1v1h-1zM175 320h1v1h-1zM227 321h1v1h-1zM331 315h1v1h-1zM209 319h1v1h-1zM137 321h1v1h-1zM349 320h1v1h-1zM302 320h1v1h-1zM397 318h1v1h-1zM301 319h1v1h-1zM189 321h1v1h-1zM279 315h1v1h-1zM309 320h1v1h-1zM148 319h1v1h-1zM201 319h1v1h-1zM192 318h1v1h-1zM137 321h1v1h-1zM260 320h1v1h-1zM213 318h1v1h-1zM276 324h1v1h-1zM111 320h1v1h-1zM106 319h1v1h-1zM348 319h1v1h-1zM113 320h1v1h-1zM156 320h1v1h-1zM220 320h1v1h-1zM96 320h1v1h-1zM189 321h1v1h-1zM272 321h1v1h-1zM326 319h1v1h-1zM324 317h1v1h-1zM119 319h1v1h-1zM109 320h1v1h-1zM413 320h1v1h-1zM174 320h1v1h-1zM87 319h1v1h-1zM286 316h1v1h-1zM189 321h1v1h-1zM60 317h1v1h-1zM86 316h1v1h-1zM90 319h1v1h-1zM143 318h1v1h-1zM212 316h1v1h-1zM136 318h1v1h-1zM161 316h1v1h-1zM323 320h1v1h-1zM134 319h1v1h-1zM337 320h1v1h-1zM306 318h1v1h-1zM338 324h1v1h-1zM61 320h1v1h-1zM309 318h1v1h-1zM105 316h1v1h-1zM204 316h1v1h-1zM121 320h1v1h-1zM247 320h1v1h-1zM274 312h1v1h-1zM141 320h1v1h-1zM181 317h1v1h-1zM404 320h1v1h-1zM162 325h1v1h-1zM361 319h1v1h-1zM107 317h1v1h-1zM210 317h1v1h-1zM122 320h1v1h-1zM88 315h1v1h-1zM187 317h1v1h-1zM190 319h1v1h-1zM392 317h1v1h-1zM89 319h1v1h-1zM246 318h1v1h-1zM234 320h1v1h-1zM307 318h1v1h-1zM333 320h1v1h-1zM133 320h1v1h-1zM332 310h1v1h-1zM389 320h1v1h-1zM371 321h1v1h-1zM212 320h1v1h-1zM129 320h1v1h-1zM200 319h1v1h-1zM374 319h1v1h-1zM307 317h1v1h-1zM269 321h1v1h-1zM213 317h1v1h-1zM421 321h1v1h-1zM413 319h1v1h-1zM265 319h1v1h-1zM197 320h1v1h-1zM125 318h1v1h-1zM176 318h1v1h-1zM159 316h1v1h-1zM366 320h1v1h-1zM124 315h1v1h-1zM123 320h1v1h-1zM92 314h1v1h-1zM184 320h1v1h-1zM157 320h1v1h-1zM252 320h1v1h-1zM365 319h1v1h-1zM236 313h1v1h-1zM256 316h1v1h-1zM216 318h1v1h-1zM150 319h1v1h-1zM166 319h1v1h-1zM315 320h1v1h-1zM82 314h1v1h-1zM283 319h1v1h-1zM233 318h1v1h-1zM125 320h1v1h-1zM144 320h1v1h-1zM154 320h1v1h-1zM78 320h1v1h-1zM294 317h1v1h-1zM139 320h1v1h-1zM363 319h1v1h-1zM62 319h1v1h-1zM426 320h1v1h-1zM144 319h1v1h-1zM307 318h1v1h-1zM213 318h1v1h-1zM368 320h1v1h-1zM301 322h1v1h-1zM309 320h1v1h-1zM102 318h1v1h-1zM330 317h1v1h-1zM88 316h1v1h-1zM81 321h1v1h-1z"/><path fill="#40a0f0" d="M152 320h1v1h-1zM165 320h1v1h-1zM203 321h1v1h-1zM328 320h1v1h-1zM377 316h1v1h-1zM283 319h1v1h-1zM278 319h1v1h-1zM105 318h1v1h-1zM145 317h1v1h-1zM343 307h1v1h-1zM331 316h1v1h-1zM234 319h1v1h-1zM370 320h1v1h-1zM371 318h1v1h-1zM216 320h1v1h-1zM218 314h1v1h-1zM168 320h1v1h-1zM129 320h1v1h-1zM264 321h1v1h-1zM235 318h1v1h-1zM321 308h1v1h-1zM299 317h1v1h-1zM114 317h1v1h-1zM119 318h1v1h-1zM206 321h1v1h-1zM133 315h1v1h-1zM236 320h1v1h-1zM202 320h1v1h-1zM286 316h1v1h-1zM265 315h1v1h-1zM92 319h1v1h-1zM415 320h1v1h-1zM68 321h1v1h-1zM322 314h1v1h-1zM301 316h1v1h-1zM343 318h1v1h-1zM288 320h1v1h-1zM142 321h1v1h-1zM113 321h1v1h-1zM310 320h1v1h-1zM339 316h1v1h-1zM297 318h1v1h-1zM264 317h1v1h-1zM87 318h1v1h-1zM116 313h1v1h-1zM297 321h1v1h-1zM309 320h1v1h-1zM349 321h1v1h-1zM272 318h1v1h-1zM260 320h1v1h-1zM100 320h1v1h-1zM315 321h1v1h-1zM144 319h1v1h-1zM151 321h1v1h-1zM120 318h1v1h-1zM235 321h1v1h-1zM300 316h1v1h-1zM160 320h1v1h-1zM150 312h1v1h-1zM232 319h1v1h-1zM253 322h1v1h-1zM368 320h1v1h-1zM181 318h1v1h-1zM231 319h1v1h-1zM408 321h1v1h-1zM83 325h1v1h-1zM100 312h1v1h-1zM217 318h1v1h-1zM341 320h1v1h-1zM276 320h1v1h-1zM79 319h1v1h-1zM387 317h1v1h-1zM329 320h1v1h-1zM329 322h1v1h-1zM169 316h1v1h-1zM100 314h1v1h-1zM123 321h1v1h-1zM92 306h1v1h-1zM74 317h1v1h-1zM284 321h1v1h-1zM358 318h1v1h-1zM345 320h1v1h-1zM60 319h1v1h-1zM312 321h1v1h-1zM271 315h1v1h-1zM219 317h1v1h-1zM340 319h1v1h-1zM318 319h1v1h-1zM160 317h1v1h-1zM301 319h1v1h-1zM109 319h1v1h-1zM342 317h1v1h-1zM142 320h1v1h-1zM283 320h1v1h-1zM335 319h1v1h-1zM309 320h1v1h-1zM75 319h1v1h-1zM353 319h1v1h-1zM240 319h1v1h-1zM329 318h1v1h-1zM120 320h1v1h-1zM276 318h1v1h-1zM82 322h1v1h-1zM151 319h1v1h-1zM327 316h1v1h-1zM210 314h1v1h-1zM138 317h1v1h-1zM89 318h1v1h-1zM239 319h1v1h-1zM94 320h1v1h-1zM82 320h1v1h-1zM253 321h1v1h-1zM96 315h1v1h-1zM64 318h1v1h-1zM63 321h1v1h-1zM315 323h1v1h-1zM169 318h1v1h-1zM237 321h1v1h-1zM306 319h1v1h-1zM94 320h1v1h-1zM70 320h1v1h-1zM320 319h1v1h-1zM262 318h1v1h-1zM325 319h1v1h-1zM157 308h1v1h-1zM338 321h1v1h-1zM99 320h1v1h-1zM294 320h1v1h-1zM368 318h1v1h-1zM391 310h1v1h-1zM134 321h1v1h-1zM287 326h1v1h-1zM97 316h1v1h-1zM119 320h1v1h-1zM113 317h1v1h-1zM110 318h1v1h-1zM245 308h1v1h-1zM214 322h1v1h-1zM193 320h1v1h-1zM194 318h1v1h-1zM283 319h1v1h-1zM192 313h1v1h-1zM164 324h1v1h-1zM74 315h1v1h-1zM315 320h1v1h-1zM272 319h1v1h-1zM246 319h1v1h-1zM348 314h1v1h-1zM337 319h1v1h-1zM276 314h1v1h-1zM288 316h1v1h-1zM385 318h1v1h-1zM217 319h1v1h-1zM189 318h1v1h-1zM178 320h1v1h-1zM160 320h1v1h-1zM437 313h1v1h-1zM151 319h1v1h-1zM220 319h1v1h-1zM152 321h1v1h-1zM253 318h1v1h-1zM157 321h1v1h-1zM160 321h1v1h-1zM97 320h1v1h-1zM273 319h1v1h-1zM120 319h1v1h-1zM180 314h1v1h-1zM218 321h1v1h-1zM356 320h1v1h-1zM244 319h1v1h-1zM117 316h1v1h-1zM105 317h1v1h-1zM105 320h1v1h-1zM407 320h1v1h-1zM256 321h1v1h-1zM363 320h1v1h-1zM409 320h1v1h-1zM188 319h1v1h-1zM60 319h1v1h-1zM294 321h1v1h-1zM204 321h1v1h-1zM202 320h1v1h-1zM358 320h1v1h-1zM120 320h1v1h-1zM408 320h1v1h-1zM102 320h1v1h-1zM138 317h1v1h-1zM307 321h1v1h-1zM316 316h1v1h-1zM327 316h1v1h-1zM224 320h1v1h-1zM282 320h1v1h-1zM217 319h1v1h-1zM273 316h1v1h-1zM282 320h1v1h-1zM302 320h1v1h-1zM396 327h1v1h-1zM268 321h1v1h-1zM311 317h1v1h-1zM138 317h1v1h-1zM251 320h1v1h-1zM149 320h1v1h-1zM80 319h1v1h-1zM386 320h1v1h-1zM76 318h1v1h-1zM400 313h1v1h-1zM421 316h1v1h-1zM415 322h1v1h-1zM106 319h1v1h-1zM297 320h1v1h-1zM393 320h1v1h-1zM182 313h1v1h-1zM271 321h1v1h-1zM310 318h1v1h-1zM168 316h1v1h-1zM216 319h1v1h-1zM201 320h1v1h-1zM92 321h1v1h-1zM276 322h1v1h-1zM149 319h1v1h-1zM262 321h1v1h-1zM84 318h1v1h-1zM200 321h1v1h-1zM348 317h1v1h-1zM138 320h1v1h-1zM283 319h1v1h-1zM357 320h1v1h-1zM167 318h1v1h-1zM348 315h1v1h-1zM111 319h1v1h-1zM198 326h1v1h-1zM325 317h1v1h-1zM238 319h1v1h-1zM266 320h1v1h-1zM319 313h1v1h-1zM114 315h1v1h-1zM308 321h1v1h-1zM429 320h1v1h-1zM405 320h1v1h-1zM102 312h1v1h-1zM250 314h1v1h-1zM183 320h1v1h-1zM274 320h1v1h-1zM127 320h1v1h-1zM110 320h1v1h-1zM291 320h1v1h-1zM202 319h1v1h-1zM424 312h1v1h-1zM269 322h1v1h-1zM92 321h1v1h-1zM244 322h1v1h-1zM211 322h1v1h-1zM129 309h1v1h-1zM191 319h1v1h-1zM265 320h1v1h-1zM180 320h1v1h-1zM146 316h1v1h-1zM238 320h1v1h-1zM291 320h1v1h-1zM228 316h1v1h-1zM376 320h1v1h-1zM64 327h1v1h-1zM343 327h1v1h-1zM112 313h1v1h-1zM168 320h1v1h-1zM209 320h1v1h-1zM190 316h1v1h-1zM339 318h1v1h-1zM190 320h1v1h-1zM340 320h1v1h-1zM124 321h1v1h-1zM353 319h1v1h-1zM339 314h1v1h-1zM307 321h1v1h-1zM243 320h1v1h-1zM135 320h1v1h-1zM238 320h1v1h-1zM154 313h1v1h-1zM102 322h1v1h-1zM165 320h1v1h-1zM106 317h1v1h-1zM337 320h1v1h-1zM149 319h1v1h-1zM169 319h1v1h-1zM141 320h1v1h-1zM61 319h1v1h-1zM141 319h1v1h-1zM222 320h1v1h-1zM108 315h1v1h-1zM349 321h1v1h-1zM262 320h1v1h-1zM114 325h1v1h-1zM74 319h1v1h-1zM140 320h1v1h-1zM215 321h1v1h-1zM90 319h1v1h-1zM270 319h1v1h-1zM300 320h1v1h-1zM207 320h1v1h-1zM207 319h1v1h-1zM261 319h1v1h-1zM269 320h1v1h-1zM129 318h1v1h-1zM386 321h1v1h-1zM218 320h1v1h-1zM377 315h1v1h-1zM350 316h1v1h-1zM339 320h1v1h-1zM321 318h1v1h-1zM88 326h1v1h-1zM389 319h1v1h-1zM315 320h1v1h-1zM183 315h1v1h-1zM286 320h1v1h-1zM138 320h1v1h-1zM394 319h1v1h-1zM197 321h1v1h-1zM312 316h1v1h-1zM428 320h1v1h-1zM134 317h1v1h-1zM307 321h1v1h-1zM186 321h1v1h-1zM342 319h1v1h-1zM70 318h1v1h-1zM264 312h1v1h-1zM156 317h1v1h-1zM211 316h1v1h-1z"/><path fill="#2a7ee8" d="M282 321h1v1h-1zM83 319h1v1h-1zM436 320h1v1h-1zM411 320h1v1h-1zM158 321h1v1h-1zM111 318h1v1h-1zM292 319h1v1h-1zM186 316h1v1h-1zM278 318h1v1h-1zM254 316h1v1h-1zM151 317h1v1h-1zM65 321h1v1h-1zM323 313h1v1h-1zM153 319h1v1h-1zM112 315h1v1h-1zM298 320h1v1h-1zM246 321h1v1h-1zM119 318h1v1h-1zM255 319h1v1h-1zM424 320h1v1h-1zM322 321h1v1h-1zM276 318h1v1h-1zM254 320h1v1h-1zM372 318h1v1h-1zM123 320h1v1h-1zM191 318h1v1h-1zM226 319h1v1h-1zM174 316h1v1h-1zM216 314h1v1h-1zM209 320h1v1h-1zM72 319h1v1h-1zM290 324h1v1h-1zM354 320h1v1h-1zM278 320h1v1h-1zM324 321h1v1h-1zM360 311h1v1h-1zM174 320h1v1h-1zM120 318h1v1h-1zM63 315h1v1h-1zM378 320h1v1h-1zM267 322h1v1h-1zM130 317h1v1h-1zM317 321h1v1h-1zM375 319h1v1h-1zM76 316h1v1h-1zM105 315h1v1h-1zM194 319h1v1h-1zM64 322h1v1h-1zM184 314h1v1h-1zM335 320h1v1h-1zM249 323h1v1h-1zM95 320h1v1h-1zM197 314h1v1h-1zM280 320h1v1h-1zM267 318h1v1h-1zM211 317h1v1h-1zM133 314h1v1h-1zM263 318h1v1h-1zM125 319h1v1h-1zM211 314h1v1h-1zM301 319h1v1h-1zM139 316h1v1h-1zM128 321h1v1h-1zM71 320h1v1h-1zM73 320h1v1h-1zM77 320h1v1h-1zM206 318h1v1h-1zM311 312h1v1h-1zM126 313h1v1h-1zM296 318h1v1h-1zM203 319h1v1h-1zM352 321h1v1h-1zM114 319h1v1h-1zM270 320h1v1h-1zM136 320h1v1h-1zM364 320h1v1h-1zM236 321h1v1h-1zM116 319h1v1h-1zM183 319h1v1h-1zM134 320h1v1h-1zM374 306h1v1h-1zM279 319h1v1h-1zM95 319h1v1h-1zM335 320h1v1h-1zM208 321h1v1h-1zM91 321h1v1h-1zM371 321h1v1h-1zM272 314h1v1h-1zM160 320h1v1h-1zM197 321h1v1h-1zM297 317h1v1h-1zM176 320h1v1h-1zM310 319h1v1h-1zM95 309h1v1h-1zM413 320h1v1h-1zM116 316h1v1h-1zM290 321h1v1h-1zM142 319h1v1h-1zM272 311h1v1h-1zM69 325h1v1h-1zM332 314h1v1h-1zM274 320h1v1h-1zM150 320h1v1h-1zM409 319h1v1h-1zM99 307h1v1h-1zM86 316h1v1h-1zM91 316h1v1h-1zM115 310h1v1h-1zM70 318h1v1h-1zM163 321h1v1h-1zM198 324h1v1h-1zM306 318h1v1h-1zM305 318h1v1h-1zM88 317h1v1h-1zM401 320h1v1h-1zM164 321h1v1h-1zM111 321h1v1h-1zM384 321h1v1h-1zM78 322h1v1h-1zM273 309h1v1h-1zM242 320h1v1h-1zM290 319h1v1h-1zM161 321h1v1h-1zM224 308h1v1h-1zM304 322h1v1h-1zM236 306h1v1h-1zM102 314h1v1h-1zM189 319h1v1h-1zM249 320h1v1h-1zM225 321h1v1h-1zM331 319h1v1h-1zM123 319h1v1h-1zM398 317h1v1h-1zM225 320h1v1h-1zM154 321h1v1h-1zM403 321h1v1h-1zM338 315h1v1h-1zM138 313h1v1h-1zM135 320h1v1h-1zM128 319h1v1h-1zM389 323h1v1h-1zM403 318h1v1h-1zM344 318h1v1h-1zM249 320h1v1h-1zM304 315h1v1h-1zM306 320h1v1h-1zM293 320h1v1h-1zM65 320h1v1h-1zM114 320h1v1h-1zM94 322h1v1h-1zM122 318h1v1h-1zM228 310h1v1h-1zM118 315h1v1h-1zM277 309h1v1h-1zM327 316h1v1h-1zM289 310h1v1h-1zM304 319h1v1h-1zM344 322h1v1h-1zM241 308h1v1h-1zM189 319h1v1h-1zM121 320h1v1h-1zM143 319h1v1h-1zM299 318h1v1h-1zM401 315h1v1h-1zM329 320h1v1h-1zM404 319h1v1h-1zM101 320h1v1h-1zM250 320h1v1h-1zM336 320h1v1h-1zM222 320h1v1h-1zM134 318h1v1h-1zM279 320h1v1h-1zM118 316h1v1h-1zM366 319h1v1h-1zM295 319h1v1h-1zM223 320h1v1h-1zM129 317h1v1h-1zM349 319h1v1h-1zM279 320h1v1h-1zM151 319h1v1h-1zM349 319h1v1h-1zM198 316h1v1h-1zM345 319h1v1h-1zM160 320h1v1h-1zM261 319h1v1h-1zM109 327h1v1h-1zM325 319h1v1h-1zM377 323h1v1h-1zM322 316h1v1h-1zM310 321h1v1h-1zM89 306h1v1h-1zM175 315h1v1h-1zM400 321h1v1h-1zM208 320h1v1h-1zM221 322h1v1h-1zM107 320h1v1h-1zM369 317h1v1h-1zM111 320h1v1h-1zM240 314h1v1h-1zM207 319h1v1h-1zM203 319h1v1h-1zM229 321h1v1h-1zM242 310h1v1h-1zM125 319h1v1h-1zM136 320h1v1h-1zM214 320h1v1h-1zM213 318h1v1h-1zM296 321h1v1h-1zM78 327h1v1h-1zM183 319h1v1h-1zM146 309h1v1h-1zM289 318h1v1h-1zM315 317h1v1h-1zM120 315h1v1h-1zM174 320h1v1h-1zM204 319h1v1h-1zM292 320h1v1h-1zM336 320h1v1h-1zM300 319h1v1h-1zM184 311h1v1h-1zM90 317h1v1h-1zM184 322h1v1h-1zM273 319h1v1h-1zM353 314h1v1h-1zM317 307h1v1h-1zM408 320h1v1h-1zM162 320h1v1h-1zM281 320h1v1h-1zM224 315h1v1h-1zM305 322h1v1h-1zM125 321h1v1h-1zM116 316h1v1h-1zM336 311h1v1h-1zM160 316h1v1h-1zM286 310h1v1h-1zM166 322h1v1h-1zM122 321h1v1h-1zM174 320h1v1h-1zM260 319h1v1h-1zM179 318h1v1h-1zM200 320h1v1h-1zM270 320h1v1h-1zM109 316h1v1h-1zM201 317h1v1h-1zM424 319h1v1h-1zM389 320h1v1h-1zM184 319h1v1h-1zM184 316h1v1h-1zM86 320h1v1h-1zM190 319h1v1h-1zM198 320h1v1h-1zM214 323h1v1h-1zM138 317h1v1h-1zM129 322h1v1h-1zM299 317h1v1h-1zM195 318h1v1h-1zM178 316h1v1h-1zM369 320h1v1h-1zM359 325h1v1h-1zM90 320h1v1h-1zM88 320h1v1h-1zM298 320h1v1h-1zM309 317h1v1h-1zM114 319h1v1h-1zM431 327h1v1h-1zM277 320h1v1h-1zM352 318h1v1h-1zM329 315h1v1h-1zM164 320h1v1h-1zM321 321h1v1h-1zM277 321h1v1h-1zM252 306h1v1h-1zM95 320h1v1h-1zM145 320h1v1h-1zM257 317h1v1h-1zM322 320h1v1h-1zM423 320h1v1h-1zM291 327h1v1h-1zM389 316h1v1h-1zM128 321h1v1h-1zM178 317h1v1h-1zM203 321h1v1h-1zM256 319h1v1h-1zM181 320h1v1h-1zM253 311h1v1h-1zM208 319h1v1h-1zM72 314h1v1h-1zM132 307h1v1h-1zM241 313h1v1h-1zM91 310h1v1h-1zM246 318h1v1h-1zM119 320h1v1h-1zM155 319h1v1h-1zM85 317h1v1h-1zM139 318h1v1h-1zM246 324h1v1h-1zM169 319h1v1h-1zM279 319h1v1h-1zM75 309h1v1h-1zM195 319h1v1h-1zM76 320h1v1h-1zM257 317h1v1h-1zM140 320h1v1h-1zM71 321h1v1h-1zM346 320h1v1h-1zM217 320h1v1h-1zM424 320h1v1h-1zM215 316h1v1h-1zM166 315h1v1h-1zM178 320h1v1h-1zM284 320h1v1h-1zM115 319h1v1h-1zM160 311h1v1h-1zM174 308h1v1h-1zM171 320h1v1h-1zM346 308h1v1h-1zM365 320h1v1h-1zM348 315h1v1h-1zM84 315h1v1h-1zM410 321h1v1h-1zM90 322h1v1h-1zM119 319h1v1h-1zM127 319h1v1h-1zM202 316h1v1h-1zM118 321h1v1h-1zM174 321h1v1h-1zM64 321h1v1h-1zM166 319h1v1h-1zM80 324h1v1h-1zM65 321h1v1h-1zM96 306h1v1h-1z"/><path fill="#40b8d8" d="M354 331h1v1h-1zM196 324h1v1h-1zM301 331h1v1h-1zM195 337h1v1h-1zM312 334h1v1h-1zM284 326h1v1h-1zM317 330h1v1h-1zM213 327h1v1h-1zM159 336h1v1h-1zM195 339h1v1h-1zM184 338h1v1h-1zM145 340h1v1h-1zM396 331h1v1h-1zM103 324h1v1h-1zM181 325h1v1h-1zM337 334h1v1h-1zM256 339h1v1h-1zM328 334h1v1h-1zM235 340h1v1h-1zM64 336h1v1h-1zM188 330h1v1h-1zM276 337h1v1h-1zM354 334h1v1h-1zM346 324h1v1h-1zM219 334h1v1h-1zM126 330h1v1h-1zM136 339h1v1h-1zM350 332h1v1h-1zM302 334h1v1h-1zM166 327h1v1h-1zM293 334h1v1h-1zM169 334h1v1h-1zM215 338h1v1h-1zM370 331h1v1h-1zM138 339h1v1h-1zM271 338h1v1h-1zM349 340h1v1h-1zM379 337h1v1h-1zM387 334h1v1h-1zM182 328h1v1h-1zM117 331h1v1h-1zM214 340h1v1h-1zM241 337h1v1h-1zM229 334h1v1h-1zM251 339h1v1h-1zM232 339h1v1h-1zM73 340h1v1h-1zM304 331h1v1h-1zM359 334h1v1h-1zM291 337h1v1h-1zM286 334h1v1h-1zM219 325h1v1h-1zM318 340h1v1h-1zM160 323h1v1h-1zM64 337h1v1h-1zM155 341h1v1h-1zM204 337h1v1h-1zM145 340h1v1h-1zM250 327h1v1h-1zM83 331h1v1h-1zM323 336h1v1h-1zM68 322h1v1h-1zM337 340h1v1h-1zM101 339h1v1h-1zM236 338h1v1h-1zM294 336h1v1h-1zM324 334h1v1h-1zM400 332h1v1h-1zM313 323h1v1h-1zM213 331h1v1h-1zM251 323h1v1h-1zM185 339h1v1h-1zM226 328h1v1h-1zM110 339h1v1h-1zM160 334h1v1h-1zM151 327h1v1h-1zM112 334h1v1h-1zM224 333h1v1h-1zM321 333h1v1h-1zM175 335h1v1h-1zM195 338h1v1h-1zM134 330h1v1h-1zM341 333h1v1h-1zM285 325h1v1h-1zM287 339h1v1h-1zM114 336h1v1h-1zM150 338h1v1h-1zM98 329h1v1h-1zM337 333h1v1h-1zM211 326h1v1h-1zM407 338h1v1h-1zM342 340h1v1h-1zM137 334h1v1h-1zM302 340h1v1h-1zM108 339h1v1h-1zM216 330h1v1h-1zM288 338h1v1h-1zM80 328h1v1h-1zM304 338h1v1h-1zM198 335h1v1h-1zM229 336h1v1h-1zM60 340h1v1h-1zM274 327h1v1h-1zM259 331h1v1h-1zM277 337h1v1h-1zM67 329h1v1h-1zM91 336h1v1h-1zM114 334h1v1h-1zM216 327h1v1h-1zM168 327h1v1h-1zM244 336h1v1h-1zM282 332h1v1h-1zM362 338h1v1h-1zM283 340h1v1h-1zM159 323h1v1h-1zM119 336h1v1h-1zM252 323h1v1h-1zM250 333h1v1h-1zM254 340h1v1h-1zM427 337h1v1h-1zM339 339h1v1h-1zM184 327h1v1h-1zM303 339h1v1h-1zM289 322h1v1h-1zM175 333h1v1h-1zM164 336h1v1h-1zM120 337h1v1h-1zM349 336h1v1h-1zM289 333h1v1h-1zM143 337h1v1h-1zM157 335h1v1h-1zM284 333h1v1h-1zM171 328h1v1h-1zM293 339h1v1h-1zM274 327h1v1h-1zM295 338h1v1h-1zM359 326h1v1h-1zM174 325h1v1h-1zM167 325h1v1h-1zM205 341h1v1h-1zM146 339h1v1h-1zM255 333h1v1h-1zM384 324h1v1h-1zM290 324h1v1h-1zM317 338h1v1h-1zM221 336h1v1h-1zM262 327h1v1h-1zM381 337h1v1h-1zM206 335h1v1h-1zM114 337h1v1h-1zM366 328h1v1h-1zM219 334h1v1h-1zM116 341h1v1h-1zM147 334h1v1h-1zM314 336h1v1h-1zM304 325h1v1h-1zM179 340h1v1h-1zM355 324h1v1h-1zM77 335h1v1h-1zM265 322h1v1h-1zM148 334h1v1h-1zM185 341h1v1h-1zM311 339h1v1h-1zM161 339h1v1h-1zM62 326h1v1h-1zM61 334h1v1h-1zM243 336h1v1h-1zM126 323h1v1h-1zM174 340h1v1h-1zM102 335h1v1h-1zM374 335h1v1h-1zM419 336h1v1h-1zM387 337h1v1h-1zM209 336h1v1h-1zM415 336h1v1h-1zM290 340h1v1h-1zM181 335h1v1h-1zM206 326h1v1h-1zM153 323h1v1h-1zM98 331h1v1h-1zM153 339h1v1h-1zM162 324h1v1h-1zM328 340h1v1h-1zM374 332h1v1h-1zM197 323h1v1h-1zM276 337h1v1h-1zM204 329h1v1h-1zM206 336h1v1h-1zM211 339h1v1h-1zM72 336h1v1h-1zM156 339h1v1h-1zM71 333h1v1h-1zM361 338h1v1h-1zM237 325h1v1h-1zM171 333h1v1h-1zM350 334h1v1h-1zM269 328h1v1h-1zM116 331h1v1h-1zM319 334h1v1h-1zM270 322h1v1h-1zM378 329h1v1h-1zM122 337h1v1h-1zM122 337h1v1h-1zM60 335h1v1h-1zM91 335h1v1h-1zM200 337h1v1h-1zM261 332h1v1h-1zM162 330h1v1h-1zM207 331h1v1h-1zM234 340h1v1h-1zM72 332h1v1h-1zM301 325h1v1h-1zM278 330h1v1h-1zM160 340h1v1h-1zM110 337h1v1h-1zM148 336h1v1h-1zM299 331h1v1h-1zM184 338h1v1h-1zM158 338h1v1h-1zM115 336h1v1h-1zM172 335h1v1h-1zM243 325h1v1h-1zM93 328h1v1h-1zM130 335h1v1h-1zM359 341h1v1h-1zM75 336h1v1h-1zM218 339h1v1h-1zM63 338h1v1h-1zM192 330h1v1h-1zM143 338h1v1h-1zM293 337h1v1h-1zM323 335h1v1h-1zM169 339h1v1h-1zM199 337h1v1h-1zM62 329h1v1h-1zM142 331h1v1h-1zM100 340h1v1h-1zM76 339h1v1h-1zM329 335h1v1h-1zM233 337h1v1h-1zM206 323h1v1h-1zM314 333h1v1h-1zM147 334h1v1h-1zM267 325h1v1h-1zM352 336h1v1h-1zM296 331h1v1h-1zM248 333h1v1h-1zM187 323h1v1h-1zM211 327h1v1h-1zM83 331h1v1h-1zM235 328h1v1h-1zM89 329h1v1h-1zM412 331h1v1h-1zM264 335h1v1h-1zM93 335h1v1h-1zM173 338h1v1h-1zM415 337h1v1h-1zM90 331h1v1h-1zM315 323h1v1h-1zM284 332h1v1h-1zM96 341h1v1h-1zM170 331h1v1h-1zM80 337h1v1h-1zM79 322h1v1h-1zM77 337h1v1h-1zM265 341h1v1h-1zM172 327h1v1h-1zM325 323h1v1h-1zM399 334h1v1h-1zM362 329h1v1h-1zM237 332h1v1h-1zM111 337h1v1h-1zM131 331h1v1h-1zM318 339h1v1h-1zM122 324h1v1h-1zM151 332h1v1h-1zM375 341h1v1h-1zM111 323h1v1h-1zM68 335h1v1h-1zM301 330h1v1h-1zM68 326h1v1h-1zM151 341h1v1h-1zM274 327h1v1h-1zM94 335h1v1h-1zM286 337h1v1h-1zM288 339h1v1h-1zM76 330h1v1h-1zM221 328h1v1h-1zM64 339h1v1h-1zM170 333h1v1h-1zM118 328h1v1h-1zM204 326h1v1h-1zM298 330h1v1h-1zM158 334h1v1h-1zM289 337h1v1h-1zM142 335h1v1h-1zM78 333h1v1h-1zM317 324h1v1h-1zM143 340h1v1h-1zM128 339h1v1h-1zM66 334h1v1h-1z"/><path fill="#20c8e0" d="M258 338h1v1h-1zM110 330h1v1h-1zM331 333h1v1h-1zM249 337h1v1h-1zM317 330h1v1h-1zM366 337h1v1h-1zM227 336h1v1h-1zM68 328h1v1h-1zM174 334h1v1h-1zM260 323h1v1h-1zM395 338h1v1h-1zM285 338h1v1h-1zM163 328h1v1h-1zM290 337h1v1h-1zM274 341h1v1h-1zM346 328h1v1h-1zM313 336h1v1h-1zM307 331h1v1h-1zM112 336h1v1h-1zM346 326h1v1h-1zM289 328h1v1h-1zM69 329h1v1h-1zM382 341h1v1h-1zM228 334h1v1h-1zM281 336h1v1h-1zM112 335h1v1h-1zM177 337h1v1h-1zM204 330h1v1h-1zM125 322h1v1h-1zM241 339h1v1h-1zM262 332h1v1h-1zM110 340h1v1h-1zM322 340h1v1h-1zM262 325h1v1h-1zM90 336h1v1h-1zM342 330h1v1h-1zM154 333h1v1h-1zM386 334h1v1h-1zM383 326h1v1h-1zM296 335h1v1h-1zM320 340h1v1h-1zM93 333h1v1h-1zM102 336h1v1h-1zM112 323h1v1h-1zM71 340h1v1h-1zM286 328h1v1h-1zM266 329h1v1h-1zM332 337h1v1h-1zM239 335h1v1h-1zM78 335h1v1h-1zM251 336h1v1h-1zM283 334h1v1h-1zM125 322h1v1h-1zM199 324h1v1h-1zM233 338h1v1h-1zM319 341h1v1h-1zM164 325h1v1h-1zM174 339h1v1h-1zM237 328h1v1h-1zM133 327h1v1h-1zM313 323h1v1h-1zM190 334h1v1h-1zM252 337h1v1h-1zM317 334h1v1h-1zM94 335h1v1h-1zM165 338h1v1h-1zM403 340h1v1h-1zM370 325h1v1h-1zM122 327h1v1h-1zM319 323h1v1h-1zM226 323h1v1h-1zM256 323h1v1h-1zM74 323h1v1h-1zM309 336h1v1h-1zM92 335h1v1h-1zM224 338h1v1h-1zM261 336h1v1h-1zM212 338h1v1h-1zM290 326h1v1h-1zM309 324h1v1h-1zM223 340h1v1h-1zM152 339h1v1h-1zM160 327h1v1h-1zM170 338h1v1h-1zM284 333h1v1h-1zM334 336h1v1h-1zM238 324h1v1h-1zM389 333h1v1h-1zM176 324h1v1h-1zM403 334h1v1h-1zM122 339h1v1h-1zM167 336h1v1h-1zM294 325h1v1h-1zM266 340h1v1h-1zM258 337h1v1h-1zM109 331h1v1h-1zM78 328h1v1h-1zM124 336h1v1h-1zM97 339h1v1h-1zM80 332h1v1h-1zM109 338h1v1h-1zM185 341h1v1h-1zM67 335h1v1h-1zM212 338h1v1h-1zM349 328h1v1h-1zM177 337h1v1h-1zM391 337h1v1h-1zM177 330h1v1h-1zM133 335h1v1h-1zM212 336h1v1h-1zM224 335h1v1h-1zM257 334h1v1h-1zM261 335h1v1h-1zM67 323h1v1h-1zM237 339h1v1h-1zM139 335h1v1h-1zM89 326h1v1h-1zM100 328h1v1h-1zM255 335h1v1h-1zM111 331h1v1h-1zM203 336h1v1h-1zM70 331h1v1h-1zM189 326h1v1h-1zM213 323h1v1h-1zM300 325h1v1h-1zM137 334h1v1h-1zM223 338h1v1h-1zM332 333h1v1h-1zM179 328h1v1h-1zM214 327h1v1h-1zM406 328h1v1h-1zM333 327h1v1h-1zM237 334h1v1h-1zM148 329h1v1h-1zM337 335h1v1h-1zM62 337h1v1h-1zM87 323h1v1h-1zM124 340h1v1h-1zM236 330h1v1h-1zM91 336h1v1h-1zM261 339h1v1h-1zM83 327h1v1h-1zM257 340h1v1h-1zM230 329h1v1h-1zM252 334h1v1h-1zM106 340h1v1h-1zM243 324h1v1h-1zM75 325h1v1h-1zM106 327h1v1h-1zM310 328h1v1h-1zM192 340h1v1h-1zM167 330h1v1h-1zM261 336h1v1h-1zM350 336h1v1h-1zM64 330h1v1h-1zM397 339h1v1h-1zM334 327h1v1h-1zM278 325h1v1h-1zM261 339h1v1h-1zM102 341h1v1h-1zM159 326h1v1h-1zM267 335h1v1h-1zM135 327h1v1h-1zM230 339h1v1h-1zM211 325h1v1h-1zM162 335h1v1h-1zM365 336h1v1h-1zM236 338h1v1h-1zM153 340h1v1h-1zM166 336h1v1h-1zM397 326h1v1h-1zM361 334h1v1h-1zM136 337h1v1h-1zM160 340h1v1h-1zM239 335h1v1h-1zM175 335h1v1h-1zM281 336h1v1h-1zM322 339h1v1h-1zM233 339h1v1h-1zM198 325h1v1h-1zM288 327h1v1h-1zM346 326h1v1h-1zM193 341h1v1h-1zM133 326h1v1h-1zM127 335h1v1h-1zM60 331h1v1h-1zM134 334h1v1h-1zM126 324h1v1h-1zM251 340h1v1h-1zM114 335h1v1h-1zM63 341h1v1h-1zM93 339h1v1h-1zM346 341h1v1h-1zM66 323h1v1h-1zM294 335h1v1h-1zM362 327h1v1h-1zM353 341h1v1h-1zM202 331h1v1h-1zM190 334h1v1h-1zM156 328h1v1h-1zM108 325h1v1h-1zM157 337h1v1h-1zM235 323h1v1h-1zM67 339h1v1h-1zM388 336h1v1h-1zM129 327h1v1h-1zM138 325h1v1h-1zM275 333h1v1h-1zM103 334h1v1h-1zM291 323h1v1h-1zM231 322h1v1h-1zM340 327h1v1h-1zM269 333h1v1h-1zM265 322h1v1h-1zM362 332h1v1h-1zM123 339h1v1h-1zM177 341h1v1h-1zM128 340h1v1h-1zM327 338h1v1h-1zM187 337h1v1h-1zM175 332h1v1h-1zM140 334h1v1h-1zM132 335h1v1h-1zM100 340h1v1h-1zM108 332h1v1h-1zM248 332h1v1h-1zM334 335h1v1h-1zM254 338h1v1h-1zM245 323h1v1h-1zM184 329h1v1h-1zM225 333h1v1h-1zM256 337h1v1h-1zM222 327h1v1h-1zM135 340h1v1h-1zM120 336h1v1h-1zM327 339h1v1h-1zM344 341h1v1h-1zM280 332h1v1h-1zM98 329h1v1h-1zM341 338h1v1h-1zM150 334h1v1h-1zM167 339h1v1h-1zM407 333h1v1h-1zM278 331h1v1h-1zM342 340h1v1h-1zM248 324h1v1h-1zM323 340h1v1h-1zM258 326h1v1h-1zM157 339h1v1h-1zM78 338h1v1h-1zM240 337h1v1h-1zM188 334h1v1h-1zM193 326h1v1h-1zM173 337h1v1h-1zM157 336h1v1h-1zM218 335h1v1h-1zM213 337h1v1h-1zM227 338h1v1h-1zM290 332h1v1h-1zM262 330h1v1h-1zM88 324h1v1h-1zM240 333h1v1h-1zM80 339h1v1h-1zM329 338h1v1h-1zM97 329h1v1h-1zM170 336h1v1h-1zM173 331h1v1h-1zM433 336h1v1h-1zM314 334h1v1h-1zM346 333h1v1h-1zM324 335h1v1h-1zM247 339h1v1h-1zM123 340h1v1h-1zM228 334h1v1h-1zM243 327h1v1h-1zM214 335h1v1h-1zM89 338h1v1h-1zM177 332h1v1h-1zM362 340h1v1h-1zM186 332h1v1h-1z"/><path fill="#30e0e8" d="M155 336h1v1h-1zM296 326h1v1h-1zM60 325h1v1h-1zM195 338h1v1h-1zM296 338h1v1h-1zM325 337h1v1h-1zM322 335h1v1h-1zM290 337h1v1h-1zM240 336h1v1h-1zM187 336h1v1h-1zM167 335h1v1h-1zM380 337h1v1h-1zM81 335h1v1h-1zM147 340h1v1h-1zM199 325h1v1h-1zM345 332h1v1h-1zM370 324h1v1h-1zM145 338h1v1h-1zM235 335h1v1h-1zM170 323h1v1h-1zM108 333h1v1h-1zM101 333h1v1h-1zM304 324h1v1h-1zM340 335h1v1h-1zM179 328h1v1h-1zM198 333h1v1h-1zM360 336h1v1h-1zM211 333h1v1h-1zM261 331h1v1h-1zM355 332h1v1h-1zM241 337h1v1h-1zM140 340h1v1h-1zM235 335h1v1h-1zM306 337h1v1h-1zM282 337h1v1h-1zM197 335h1v1h-1zM252 340h1v1h-1zM340 335h1v1h-1zM133 328h1v1h-1zM320 341h1v1h-1zM174 335h1v1h-1zM72 337h1v1h-1zM253 333h1v1h-1zM167 340h1v1h-1zM304 325h1v1h-1zM146 324h1v1h-1zM209 332h1v1h-1zM93 325h1v1h-1zM258 329h1v1h-1zM103 332h1v1h-1zM188 335h1v1h-1zM287 335h1v1h-1zM70 324h1v1h-1zM99 323h1v1h-1zM285 338h1v1h-1zM103 334h1v1h-1zM312 329h1v1h-1zM116 341h1v1h-1zM121 336h1v1h-1zM210 326h1v1h-1zM393 331h1v1h-1zM295 338h1v1h-1zM187 324h1v1h-1zM91 328h1v1h-1zM141 338h1v1h-1zM270 338h1v1h-1zM168 339h1v1h-1zM124 329h1v1h-1zM128 341h1v1h-1zM179 336h1v1h-1zM207 330h1v1h-1zM120 324h1v1h-1zM252 335h1v1h-1zM211 328h1v1h-1zM367 337h1v1h-1zM251 330h1v1h-1zM79 330h1v1h-1zM256 337h1v1h-1zM417 327h1v1h-1zM97 336h1v1h-1zM84 340h1v1h-1zM85 337h1v1h-1zM309 322h1v1h-1zM76 328h1v1h-1zM236 333h1v1h-1zM223 328h1v1h-1zM215 325h1v1h-1zM298 335h1v1h-1zM255 336h1v1h-1zM221 334h1v1h-1zM265 337h1v1h-1zM103 335h1v1h-1zM225 332h1v1h-1zM148 333h1v1h-1zM319 340h1v1h-1zM216 333h1v1h-1zM100 326h1v1h-1zM277 338h1v1h-1zM229 332h1v1h-1zM214 327h1v1h-1zM297 334h1v1h-1zM349 325h1v1h-1zM126 329h1v1h-1zM313 336h1v1h-1zM388 323h1v1h-1zM75 339h1v1h-1zM375 339h1v1h-1zM409 325h1v1h-1zM139 338h1v1h-1zM313 329h1v1h-1zM282 330h1v1h-1zM318 333h1v1h-1zM256 341h1v1h-1zM294 337h1v1h-1zM179 334h1v1h-1zM127 338h1v1h-1zM322 324h1v1h-1zM79 335h1v1h-1zM360 338h1v1h-1zM276 339h1v1h-1zM165 334h1v1h-1zM397 337h1v1h-1zM180 325h1v1h-1zM139 331h1v1h-1zM221 333h1v1h-1zM147 338h1v1h-1zM164 326h1v1h-1zM354 324h1v1h-1zM71 336h1v1h-1zM283 330h1v1h-1zM270 333h1v1h-1zM274 328h1v1h-1zM223 339h1v1h-1zM141 329h1v1h-1zM260 327h1v1h-1zM205 326h1v1h-1zM306 324h1v1h-1zM212 337h1v1h-1zM99 330h1v1h-1zM315 327h1v1h-1zM291 341h1v1h-1zM275 333h1v1h-1zM152 340h1v1h-1zM166 324h1v1h-1zM208 339h1v1h-1zM199 339h1v1h-1zM106 322h1v1h-1zM169 335h1v1h-1zM279 331h1v1h-1zM79 338h1v1h-1zM295 330h1v1h-1zM83 330h1v1h-1zM68 334h1v1h-1zM108 337h1v1h-1zM278 341h1v1h-1zM170 334h1v1h-1zM156 336h1v1h-1zM303 337h1v1h-1zM155 336h1v1h-1zM222 331h1v1h-1zM288 324h1v1h-1zM327 337h1v1h-1zM309 336h1v1h-1zM74 334h1v1h-1zM74 334h1v1h-1zM108 327h1v1h-1zM385 330h1v1h-1zM112 333h1v1h-1zM230 327h1v1h-1zM127 337h1v1h-1zM269 323h1v1h-1zM241 327h1v1h-1zM405 338h1v1h-1zM429 326h1v1h-1zM103 340h1v1h-1zM272 338h1v1h-1zM86 338h1v1h-1zM89 340h1v1h-1zM294 335h1v1h-1zM381 332h1v1h-1zM213 333h1v1h-1zM259 340h1v1h-1zM64 337h1v1h-1zM406 339h1v1h-1zM162 330h1v1h-1zM331 331h1v1h-1zM254 337h1v1h-1zM223 337h1v1h-1zM172 334h1v1h-1zM124 334h1v1h-1zM180 328h1v1h-1zM67 325h1v1h-1zM87 333h1v1h-1zM115 334h1v1h-1zM402 338h1v1h-1zM191 333h1v1h-1zM287 340h1v1h-1zM265 339h1v1h-1zM163 322h1v1h-1zM61 330h1v1h-1zM142 340h1v1h-1zM162 326h1v1h-1zM62 327h1v1h-1zM96 327h1v1h-1zM284 338h1v1h-1zM315 335h1v1h-1zM244 340h1v1h-1zM70 331h1v1h-1zM270 325h1v1h-1zM64 337h1v1h-1zM196 323h1v1h-1zM212 335h1v1h-1zM74 338h1v1h-1zM120 340h1v1h-1zM371 336h1v1h-1zM195 340h1v1h-1zM77 330h1v1h-1zM221 337h1v1h-1zM181 339h1v1h-1zM294 338h1v1h-1zM179 329h1v1h-1zM286 335h1v1h-1zM106 339h1v1h-1zM93 323h1v1h-1zM113 328h1v1h-1zM155 322h1v1h-1zM239 326h1v1h-1zM313 335h1v1h-1zM210 329h1v1h-1zM236 338h1v1h-1zM205 334h1v1h-1zM117 338h1v1h-1zM266 328h1v1h-1zM221 337h1v1h-1zM294 339h1v1h-1zM205 337h1v1h-1zM139 333h1v1h-1zM73 334h1v1h-1zM297 328h1v1h-1zM132 329h1v1h-1zM117 325h1v1h-1zM108 324h1v1h-1zM345 337h1v1h-1zM260 337h1v1h-1zM196 339h1v1h-1zM345 325h1v1h-1zM210 337h1v1h-1zM113 328h1v1h-1zM355 332h1v1h-1zM71 333h1v1h-1zM437 334h1v1h-1zM323 332h1v1h-1zM298 331h1v1h-1zM134 335h1v1h-1zM224 323h1v1h-1zM238 336h1v1h-1zM199 337h1v1h-1zM114 328h1v1h-1zM179 338h1v1h-1zM201 339h1v1h-1zM73 327h1v1h-1zM275 323h1v1h-1zM245 333h1v1h-1zM280 341h1v1h-1zM421 324h1v1h-1zM343 336h1v1h-1zM283 325h1v1h-1zM228 329h1v1h-1zM210 331h1v1h-1zM64 330h1v1h-1zM130 330h1v1h-1zM173 334h1v1h-1zM267 329h1v1h-1zM354 330h1v1h-1zM73 336h1v1h-1zM145 334h1v1h-1zM213 334h1v1h-1zM222 328h1v1h-1zM120 338h1v1h-1zM171 336h1v1h-1zM255 341h1v1h-1zM232 325h1v1h-1zM197 339h1v1h-1zM173 340h1v1h-1zM72 337h1v1h-1zM253 340h1v1h-1zM131 335h1v1h-1zM223 334h1v1h-1zM143 338h1v1h-1zM148 326h1v1h-1zM160 340h1v1h-1zM124 333h1v1h-1zM236 337h1v1h-1zM83 340h1v1h-1zM68 335h1v1h-1zM323 336h1v1h-1zM288 336h1v1h-1zM260 335h1v1h-1zM128 323h1v1h-1zM151 325h1v1h-1zM105 328h1v1h-1zM255 337h1v1h-1zM130 322h1v1h-1zM86 335h1v1h-1zM160 333h1v1h-1zM220 333h1v1h-1zM108 332h1v1h-1zM114 331h1v1h-1zM338 327h1v1h-1zM176 328h1v1h-1zM235 335h1v1h-1zM69 334h1v1h-1zM112 335h1v1h-1z"/><path fill="#40f040" d="M112 341h1v1h-1zM82 342h1v1h-1zM259 341h1v1h-1zM188 342h1v1h-1zM260 342h1v1h-1zM180 340h1v1h-1zM152 342h1v1h-1zM323 341h1v1h-1zM224 342h1v1h-1zM262 342h1v1h-1zM60 340h1v1h-1zM266 341h1v1h-1zM139 342h1v1h-1zM280 340h1v1h-1zM344 341h1v1h-1zM209 342h1v1h-1zM324 334h1v1h-1zM227 342h1v1h-1zM368 341h1v1h-1zM396 341h1v1h-1zM68 338h1v1h-1zM422 341h1v1h-1zM233 338h1v1h-1zM331 336h1v1h-1zM154 340h1v1h-1zM287 342h1v1h-1zM390 339h1v1h-1zM62 342h1v1h-1zM329 342h1v1h-1zM200 342h1v1h-1zM336 338h1v1h-1zM242 342h1v1h-1zM254 337h1v1h-1zM212 341h1v1h-1zM171 343h1v1h-1zM87 343h1v1h-1zM286 343h1v1h-1zM248 341h1v1h-1zM265 342h1v1h-1zM344 341h1v1h-1zM314 338h1v1h-1zM285 337h1v1h-1zM283 342h1v1h-1zM185 341h1v1h-1zM361 336h1v1h-1zM313 342h1v1h-1zM233 339h1v1h-1zM311 337h1v1h-1zM324 334h1v1h-1zM74 342h1v1h-1zM364 341h1v1h-1zM213 342h1v1h-1zM270 342h1v1h-1zM237 342h1v1h-1zM61 334h1v1h-1zM287 341h1v1h-1zM205 342h1v1h-1zM250 342h1v1h-1zM187 342h1v1h-1zM120 340h1v1h-1zM287 342h1v1h-1zM285 342h1v1h-1zM313 343h1v1h-1zM158 335h1v1h-1zM255 341h1v1h-1zM78 341h1v1h-1zM155 339h1v1h-1zM288 339h1v1h-1zM196 340h1v1h-1zM128 334h1v1h-1zM320 337h1v1h-1zM112 342h1v1h-1zM69 342h1v1h-1zM175 338h1v1h-1zM223 341h1v1h-1zM352 342h1v1h-1zM149 337h1v1h-1zM249 339h1v1h-1zM344 341h1v1h-1zM291 341h1v1h-1zM239 341h1v1h-1zM148 338h1v1h-1zM249 341h1v1h-1zM254 341h1v1h-1zM314 341h1v1h-1zM439 339h1v1h-1zM208 338h1v1h-1zM414 342h1v1h-1zM195 337h1v1h-1zM258 334h1v1h-1zM338 334h1v1h-1zM326 342h1v1h-1zM293 341h1v1h-1zM267 337h1v1h-1zM433 338h1v1h-1zM205 342h1v1h-1zM315 342h1v1h-1zM163 341h1v1h-1zM301 342h1v1h-1zM122 335h1v1h-1zM267 338h1v1h-1zM232 341h1v1h-1zM231 342h1v1h-1zM303 342h1v1h-1zM95 334h1v1h-1zM216 342h1v1h-1zM69 342h1v1h-1zM217 342h1v1h-1zM247 342h1v1h-1zM287 342h1v1h-1zM158 341h1v1h-1zM153 341h1v1h-1zM125 341h1v1h-1zM190 340h1v1h-1zM259 335h1v1h-1zM243 341h1v1h-1zM189 341h1v1h-1zM411 334h1v1h-1zM158 336h1v1h-1zM217 342h1v1h-1zM332 341h1v1h-1zM270 342h1v1h-1zM261 342h1v1h-1zM373 342h1v1h-1zM280 342h1v1h-1zM82 342h1v1h-1zM72 341h1v1h-1zM175 339h1v1h-1zM324 342h1v1h-1zM124 342h1v1h-1zM290 342h1v1h-1zM100 336h1v1h-1zM176 342h1v1h-1zM357 341h1v1h-1zM334 342h1v1h-1zM107 340h1v1h-1zM107 333h1v1h-1zM100 341h1v1h-1zM93 342h1v1h-1zM423 337h1v1h-1zM435 342h1v1h-1zM120 342h1v1h-1zM85 335h1v1h-1zM77 338h1v1h-1zM196 341h1v1h-1zM116 334h1v1h-1zM316 340h1v1h-1zM336 338h1v1h-1zM201 341h1v1h-1zM374 341h1v1h-1zM103 341h1v1h-1zM330 337h1v1h-1zM299 342h1v1h-1zM154 341h1v1h-1zM362 341h1v1h-1zM234 342h1v1h-1zM268 335h1v1h-1zM99 342h1v1h-1zM119 341h1v1h-1zM179 342h1v1h-1zM157 343h1v1h-1zM413 341h1v1h-1zM105 337h1v1h-1zM84 341h1v1h-1zM320 341h1v1h-1zM196 340h1v1h-1zM192 342h1v1h-1zM112 340h1v1h-1zM411 342h1v1h-1zM122 339h1v1h-1zM184 341h1v1h-1zM359 342h1v1h-1zM344 341h1v1h-1zM259 335h1v1h-1zM75 341h1v1h-1zM71 341h1v1h-1zM290 336h1v1h-1zM68 342h1v1h-1zM70 343h1v1h-1zM281 334h1v1h-1zM350 337h1v1h-1zM146 334h1v1h-1zM237 334h1v1h-1zM219 339h1v1h-1zM160 337h1v1h-1zM215 333h1v1h-1zM319 334h1v1h-1zM173 335h1v1h-1zM86 341h1v1h-1zM269 341h1v1h-1zM152 341h1v1h-1zM174 339h1v1h-1zM359 334h1v1h-1zM176 343h1v1h-1zM141 341h1v1h-1zM194 342h1v1h-1zM230 342h1v1h-1zM120 342h1v1h-1zM403 333h1v1h-1zM155 341h1v1h-1zM367 342h1v1h-1zM354 341h1v1h-1zM131 342h1v1h-1zM273 338h1v1h-1zM262 342h1v1h-1zM158 341h1v1h-1zM261 342h1v1h-1zM381 342h1v1h-1zM189 339h1v1h-1zM95 341h1v1h-1zM230 339h1v1h-1zM232 342h1v1h-1zM359 336h1v1h-1zM213 341h1v1h-1zM315 337h1v1h-1zM85 342h1v1h-1zM105 341h1v1h-1zM211 342h1v1h-1zM295 333h1v1h-1zM353 342h1v1h-1zM351 342h1v1h-1zM142 342h1v1h-1zM206 341h1v1h-1zM65 336h1v1h-1zM222 341h1v1h-1zM315 341h1v1h-1zM321 338h1v1h-1zM64 338h1v1h-1zM121 337h1v1h-1zM149 337h1v1h-1zM62 341h1v1h-1zM94 342h1v1h-1zM180 342h1v1h-1zM165 341h1v1h-1zM88 336h1v1h-1zM146 341h1v1h-1zM143 342h1v1h-1zM311 341h1v1h-1zM352 333h1v1h-1zM120 335h1v1h-1zM175 342h1v1h-1zM393 341h1v1h-1zM68 339h1v1h-1zM371 342h1v1h-1zM87 342h1v1h-1zM165 342h1v1h-1zM157 339h1v1h-1zM324 337h1v1h-1zM278 341h1v1h-1zM139 341h1v1h-1zM313 336h1v1h-1zM361 340h1v1h-1zM376 341h1v1h-1zM260 335h1v1h-1zM326 341h1v1h-1zM114 339h1v1h-1zM77 340h1v1h-1zM180 339h1v1h-1zM215 342h1v1h-1zM127 341h1v1h-1zM242 341h1v1h-1zM174 337h1v1h-1zM332 341h1v1h-1zM305 340h1v1h-1zM307 336h1v1h-1zM426 337h1v1h-1zM263 342h1v1h-1zM226 342h1v1h-1zM238 341h1v1h-1zM116 337h1v1h-1zM162 342h1v1h-1zM112 342h1v1h-1zM114 342h1v1h-1zM186 333h1v1h-1zM134 333h1v1h-1zM267 334h1v1h-1zM223 340h1v1h-1zM286 334h1v1h-1zM326 341h1v1h-1zM331 337h1v1h-1zM102 342h1v1h-1zM91 341h1v1h-1zM284 335h1v1h-1zM104 340h1v1h-1zM280 337h1v1h-1zM190 342h1v1h-1zM175 343h1v1h-1zM192 341h1v1h-1zM241 342h1v1h-1zM102 342h1v1h-1zM236 342h1v1h-1zM218 342h1v1h-1zM238 336h1v1h-1zM236 342h1v1h-1zM358 338h1v1h-1zM116 341h1v1h-1zM417 334h1v1h-1zM435 335h1v1h-1zM88 341h1v1h-1zM102 339h1v1h-1zM295 341h1v1h-1zM158 340h1v1h-1zM119 339h1v1h-1zM371 341h1v1h-1zM427 341h1v1h-1zM125 341h1v1h-1zM212 336h1v1h-1zM246 341h1v1h-1zM223 335h1v1h-1zM206 336h1v1h-1zM266 341h1v1h-1zM296 336h1v1h-1zM274 342h1v1h-1zM68 337h1v1h-1zM327 336h1v1h-1zM148 342h1v1h-1zM355 342h1v1h-1zM333 342h1v1h-1zM195 336h1v1h-1zM157 341h1v1h-1zM303 341h1v1h-1zM146 342h1v1h-1zM105 341h1v1h-1zM200 335h1v1h-1zM114 342h1v1h-1zM234 341h1v1h-1zM146 335h1v1h-1zM92 342h1v1h-1zM370 342h1v1h-1zM160 341h1v1h-1zM201 342h1v1h-1zM170 334h1v1h-1zM360 340h1v1h-1zM347 342h1v1h-1zM275 342h1v1h-1zM144 342h1v1h-1zM70 341h1v1h-1zM106 343h1v1h-1zM243 340h1v1h-1zM186 342h1v1h-1zM292 342h1v1h-1zM71 341h1v1h-1zM320 340h1v1h-1zM404 334h1v1h-1zM431 340h1v1h-1zM344 342h1v1h-1zM349 339h1v1h-1zM230 341h1v1h-1zM130 342h1v1h-1zM194 338h1v1h-1zM232 336h1v1h-1zM297 342h1v1h-1zM91 343h1v1h-1zM333 341h1v1h-1zM321 334h1v1h-1zM132 341h1v1h-1zM157 342h1v1h-1zM98 336h1v1h-1zM322 342h1v1h-1zM103 342h1v1h-1zM283 341h1v1h-1zM78 341h1v1h-1zM159 341h1v1h-1zM363 337h1v1h-1zM289 341h1v1h-1zM169 341h1v1h-1zM282 342h1v1h-1zM220 342h1v1h-1zM59 334h1v1h-1zM302 340h1v1h-1zM98 342h1v1h-1zM235 339h1v1h-1zM225 341h1v1h-1zM263 341h1v1h-1zM168 341h1v1h-1zM281 341h1v1h-1zM163 333h1v1h-1zM213 342h1v1h-1zM288 342h1v1h-1zM224 342h1v1h-1zM121 342h1v1h-1zM435 341h1v1h-1zM314 341h1v1h-1zM283 338h1v1h-1zM275 334h1v1h-1zM212 339h1v1h-1zM128 342h1v1h-1zM68 337h1v1h-1zM315 341h1v1h-1zM73 341h1v1h-1zM318 342h1v1h-1zM316 335h1v1h-1zM83 333h1v1h-1zM266 333h1v1h-1zM318 334h1v1h-1zM153 341h1v1h-1zM122 341h1v1h-1zM245 341h1v1h-1zM152 337h1v1h-1zM65 342h1v1h-1zM234 341h1v1h-1zM324 341h1v1h-1zM79 341h1v1h-1zM342 341h1v1h-1zM362 341h1v1h-1zM347 341h1v1h-1zM339 337h1v1h-1zM439 342h1v1h-1zM369 336h1v1h-1zM135 341h1v1h-1zM81 343h1v1h-1zM252 341h1v1h-1zM313 342h1v1h-1zM92 341h1v1h-1zM74 342h1v1h-1zM226 341h1v1h-1zM261 335h1v1h-1zM166 343h1v1h-1zM143 341h1v1h-1zM81 341h1v1h-1zM190 336h1v1h-1zM91 341h1v1h-1zM208 341h1v1h-1zM257 341h1v1h-1zM360 341h1v1h-1zM73 342h1v1h-1zM118 339h1v1h-1zM237 341h1v1h-1zM217 341h1v1h-1zM361 341h1v1h-1zM137 342h1v1h-1zM317 333h1v1h-1zM206 341h1v1h-1zM241 333h1v1h-1zM224 341h1v1h-1zM114 341h1v1h-1zM75 337h1v1h-1zM88 338h1v1h-1zM306 341h1v1h-1zM156 342h1v1h-1zM210 342h1v1h-1z"/><path fill="#30c830" d="M359 342h1v1h-1zM335 336h1v1h-1zM134 341h1v1h-1zM212 341h1v1h-1zM143 342h1v1h-1zM317 342h1v1h-1zM125 340h1v1h-1zM334 341h1v1h-1zM86 341h1v1h-1zM186 342h1v1h-1zM158 339h1v1h-1zM222 342h1v1h-1zM89 341h1v1h-1zM236 341h1v1h-1zM230 342h1v1h-1zM267 342h1v1h-1zM273 340h1v1h-1zM216 341h1v1h-1zM93 341h1v1h-1zM131 342h1v1h-1zM205 337h1v1h-1zM287 333h1v1h-1zM218 342h1v1h-1zM280 342h1v1h-1zM345 342h1v1h-1zM283 338h1v1h-1zM81 341h1v1h-1zM147 339h1v1h-1zM360 342h1v1h-1zM301 342h1v1h-1zM369 337h1v1h-1zM349 343h1v1h-1zM218 342h1v1h-1zM151 341h1v1h-1zM110 335h1v1h-1zM244 341h1v1h-1zM330 341h1v1h-1zM261 341h1v1h-1zM93 341h1v1h-1zM127 338h1v1h-1zM87 341h1v1h-1zM194 341h1v1h-1zM328 339h1v1h-1zM352 339h1v1h-1zM93 342h1v1h-1zM358 341h1v1h-1zM173 341h1v1h-1zM222 341h1v1h-1zM242 336h1v1h-1zM119 341h1v1h-1zM111 342h1v1h-1zM319 342h1v1h-1zM136 341h1v1h-1zM358 337h1v1h-1zM162 342h1v1h-1zM392 342h1v1h-1zM153 341h1v1h-1zM303 335h1v1h-1zM141 340h1v1h-1zM267 337h1v1h-1zM227 342h1v1h-1zM305 341h1v1h-1zM271 342h1v1h-1zM334 338h1v1h-1zM226 341h1v1h-1zM416 341h1v1h-1zM277 341h1v1h-1zM184 337h1v1h-1zM213 341h1v1h-1zM83 341h1v1h-1zM316 341h1v1h-1zM279 341h1v1h-1zM209 340h1v1h-1zM376 334h1v1h-1zM193 343h1v1h-1zM227 341h1v1h-1zM108 341h1v1h-1zM307 342h1v1h-1zM360 341h1v1h-1zM412 338h1v1h-1zM195 342h1v1h-1zM311 342h1v1h-1zM242 341h1v1h-1zM289 337h1v1h-1zM181 341h1v1h-1zM143 342h1v1h-1zM182 335h1v1h-1zM162 342h1v1h-1zM125 341h1v1h-1zM367 335h1v1h-1zM252 341h1v1h-1zM279 337h1v1h-1zM76 340h1v1h-1zM354 340h1v1h-1zM228 343h1v1h-1zM369 335h1v1h-1zM62 341h1v1h-1zM92 341h1v1h-1zM242 336h1v1h-1zM291 342h1v1h-1zM76 336h1v1h-1zM348 342h1v1h-1zM85 342h1v1h-1zM316 342h1v1h-1zM253 337h1v1h-1zM124 334h1v1h-1zM192 340h1v1h-1zM268 340h1v1h-1zM353 341h1v1h-1zM425 342h1v1h-1zM146 342h1v1h-1zM121 340h1v1h-1zM101 341h1v1h-1zM234 341h1v1h-1zM267 339h1v1h-1zM360 334h1v1h-1zM76 342h1v1h-1zM396 333h1v1h-1zM262 338h1v1h-1zM108 340h1v1h-1zM353 340h1v1h-1zM69 342h1v1h-1zM84 340h1v1h-1zM342 342h1v1h-1zM282 342h1v1h-1zM265 342h1v1h-1zM98 341h1v1h-1zM327 339h1v1h-1zM292 341h1v1h-1zM354 342h1v1h-1zM322 339h1v1h-1zM271 342h1v1h-1zM295 342h1v1h-1zM347 341h1v1h-1zM329 341h1v1h-1zM261 340h1v1h-1zM253 342h1v1h-1zM306 341h1v1h-1zM180 341h1v1h-1zM425 342h1v1h-1zM342 343h1v1h-1zM248 336h1v1h-1zM272 342h1v1h-1zM147 336h1v1h-1zM240 340h1v1h-1zM143 340h1v1h-1zM132 341h1v1h-1zM281 341h1v1h-1zM278 337h1v1h-1zM101 339h1v1h-1zM150 337h1v1h-1zM244 338h1v1h-1zM128 333h1v1h-1zM288 341h1v1h-1zM195 333h1v1h-1zM200 341h1v1h-1zM186 342h1v1h-1zM128 342h1v1h-1zM166 336h1v1h-1zM116 338h1v1h-1zM207 341h1v1h-1zM180 342h1v1h-1zM128 336h1v1h-1zM129 341h1v1h-1zM295 336h1v1h-1zM171 338h1v1h-1zM236 342h1v1h-1zM69 343h1v1h-1zM291 342h1v1h-1zM321 333h1v1h-1zM142 338h1v1h-1zM359 336h1v1h-1zM87 341h1v1h-1zM218 342h1v1h-1zM69 340h1v1h-1zM270 341h1v1h-1zM224 335h1v1h-1zM262 342h1v1h-1zM361 335h1v1h-1zM320 342h1v1h-1zM100 341h1v1h-1zM172 341h1v1h-1zM197 342h1v1h-1zM89 338h1v1h-1zM280 341h1v1h-1zM131 335h1v1h-1zM73 337h1v1h-1zM155 337h1v1h-1zM306 336h1v1h-1zM311 341h1v1h-1zM95 340h1v1h-1zM332 342h1v1h-1zM124 341h1v1h-1zM92 339h1v1h-1zM159 342h1v1h-1zM321 335h1v1h-1zM70 339h1v1h-1zM227 342h1v1h-1zM232 341h1v1h-1zM86 340h1v1h-1zM133 337h1v1h-1zM206 334h1v1h-1zM135 341h1v1h-1zM139 342h1v1h-1zM178 341h1v1h-1zM87 341h1v1h-1zM307 337h1v1h-1zM123 341h1v1h-1zM71 336h1v1h-1zM376 341h1v1h-1zM168 342h1v1h-1zM173 336h1v1h-1zM95 341h1v1h-1zM323 341h1v1h-1zM190 341h1v1h-1zM236 340h1v1h-1zM122 342h1v1h-1zM116 343h1v1h-1zM100 341h1v1h-1zM75 334h1v1h-1zM304 339h1v1h-1zM320 337h1v1h-1zM104 341h1v1h-1zM242 341h1v1h-1zM279 341h1v1h-1zM80 342h1v1h-1zM261 342h1v1h-1zM264 337h1v1h-1zM133 342h1v1h-1zM156 340h1v1h-1zM349 337h1v1h-1zM173 339h1v1h-1zM246 341h1v1h-1zM353 335h1v1h-1zM306 342h1v1h-1zM207 341h1v1h-1zM215 340h1v1h-1zM327 341h1v1h-1zM134 340h1v1h-1zM188 337h1v1h-1zM267 341h1v1h-1zM342 342h1v1h-1zM128 342h1v1h-1zM309 342h1v1h-1zM165 342h1v1h-1zM283 341h1v1h-1zM281 341h1v1h-1zM307 341h1v1h-1zM126 334h1v1h-1zM154 342h1v1h-1zM255 341h1v1h-1zM335 342h1v1h-1zM101 341h1v1h-1zM187 341h1v1h-1zM319 342h1v1h-1zM119 342h1v1h-1zM61 342h1v1h-1zM115 342h1v1h-1zM275 342h1v1h-1zM254 341h1v1h-1zM185 334h1v1h-1zM316 341h1v1h-1zM118 341h1v1h-1zM428 338h1v1h-1zM321 337h1v1h-1zM320 342h1v1h-1zM140 340h1v1h-1zM208 342h1v1h-1zM89 336h1v1h-1zM343 341h1v1h-1zM278 341h1v1h-1zM124 341h1v1h-1zM196 341h1v1h-1zM228 342h1v1h-1zM376 342h1v1h-1zM302 336h1v1h-1zM183 334h1v1h-1zM293 343h1v1h-1zM111 342h1v1h-1zM123 342h1v1h-1zM107 341h1v1h-1zM344 342h1v1h-1zM182 341h1v1h-1zM344 341h1v1h-1zM286 339h1v1h-1zM204 342h1v1h-1zM415 334h1v1h-1zM85 334h1v1h-1zM109 343h1v1h-1zM202 341h1v1h-1zM221 342h1v1h-1zM353 341h1v1h-1zM108 342h1v1h-1zM177 341h1v1h-1zM104 341h1v1h-1zM333 342h1v1h-1zM279 341h1v1h-1zM257 340h1v1h-1zM243 341h1v1h-1zM168 334h1v1h-1zM298 342h1v1h-1zM332 341h1v1h-1zM203 336h1v1h-1zM335 341h1v1h-1zM239 341h1v1h-1zM75 342h1v1h-1zM106 342h1v1h-1zM211 333h1v1h-1zM69 333h1v1h-1zM296 337h1v1h-1zM129 336h1v1h-1zM344 341h1v1h-1zM342 341h1v1h-1zM99 335h1v1h-1zM181 341h1v1h-1zM304 342h1v1h-1zM129 342h1v1h-1zM115 340h1v1h-1zM235 343h1v1h-1zM421 339h1v1h-1zM390 342h1v1h-1zM289 341h1v1h-1zM89 342h1v1h-1zM275 338h1v1h-1zM427 341h1v1h-1zM426 342h1v1h-1zM210 342h1v1h-1zM399 333h1v1h-1zM78 336h1v1h-1zM337 342h1v1h-1zM237 341h1v1h-1zM119 342h1v1h-1zM433 341h1v1h-1zM204 337h1v1h-1zM70 340h1v1h-1zM301 336h1v1h-1zM323 341h1v1h-1zM84 335h1v1h-1zM62 341h1v1h-1zM166 338h1v1h-1zM106 335h1v1h-1zM274 341h1v1h-1zM334 340h1v1h-1zM188 342h1v1h-1zM270 342h1v1h-1zM96 342h1v1h-1zM286 341h1v1h-1zM67 341h1v1h-1zM402 341h1v1h-1zM171 342h1v1h-1zM333 340h1v1h-1zM234 342h1v1h-1zM246 336h1v1h-1zM351 339h1v1h-1zM141 342h1v1h-1zM236 341h1v1h-1zM270 342h1v1h-1zM86 342h1v1h-1zM198 337h1v1h-1zM133 342h1v1h-1zM119 341h1v1h-1zM223 338h1v1h-1zM257 338h1v1h-1zM154 341h1v1h-1zM314 342h1v1h-1zM105 342h1v1h-1zM78 342h1v1h-1zM259 335h1v1h-1zM127 342h1v1h-1zM130 342h1v1h-1zM309 334h1v1h-1zM379 341h1v1h-1zM263 340h1v1h-1zM345 341h1v1h-1zM268 341h1v1h-1zM212 342h1v1h-1zM363 342h1v1h-1zM297 342h1v1h-1zM334 342h1v1h-1zM161 342h1v1h-1zM351 338h1v1h-1zM295 342h1v1h-1zM210 343h1v1h-1zM179 341h1v1h-1zM320 340h1v1h-1zM336 335h1v1h-1zM241 334h1v1h-1zM234 339h1v1h-1zM174 335h1v1h-1zM83 341h1v1h-1zM195 339h1v1h-1zM69 340h1v1h-1zM140 341h1v1h-1zM318 342h1v1h-1zM65 342h1v1h-1zM349 341h1v1h-1zM320 342h1v1h-1zM272 341h1v1h-1zM354 334h1v1h-1zM314 339h1v1h-1zM375 341h1v1h-1zM220 338h1v1h-1zM349 342h1v1h-1zM215 336h1v1h-1zM180 342h1v1h-1zM143 335h1v1h-1zM124 334h1v1h-1zM351 341h1v1h-1zM59 341h1v1h-1zM336 342h1v1h-1zM116 335h1v1h-1zM264 340h1v1h-1z"/><path fill="#20e020" d="M192 339h1v1h-1zM233 342h1v1h-1zM417 342h1v1h-1zM199 342h1v1h-1zM204 342h1v1h-1zM129 342h1v1h-1zM302 341h1v1h-1zM224 339h1v1h-1zM220 342h1v1h-1zM366 341h1v1h-1zM354 342h1v1h-1zM258 337h1v1h-1zM78 340h1v1h-1zM62 342h1v1h-1zM180 342h1v1h-1zM414 341h1v1h-1zM411 341h1v1h-1zM127 342h1v1h-1zM208 334h1v1h-1zM117 341h1v1h-1zM329 341h1v1h-1zM300 339h1v1h-1zM366 340h1v1h-1zM206 339h1v1h-1zM433 342h1v1h-1zM134 340h1v1h-1zM191 341h1v1h-1zM194 341h1v1h-1zM89 341h1v1h-1zM244 337h1v1h-1zM89 342h1v1h-1zM95 338h1v1h-1zM257 341h1v1h-1zM118 334h1v1h-1zM311 343h1v1h-1zM351 342h1v1h-1zM118 341h1v1h-1zM147 342h1v1h-1zM203 342h1v1h-1zM281 340h1v1h-1zM107 338h1v1h-1zM164 342h1v1h-1zM177 341h1v1h-1zM133 341h1v1h-1zM107 340h1v1h-1zM81 342h1v1h-1zM296 342h1v1h-1zM85 341h1v1h-1zM93 334h1v1h-1zM342 336h1v1h-1zM206 341h1v1h-1zM121 342h1v1h-1zM105 342h1v1h-1zM357 342h1v1h-1zM287 341h1v1h-1zM334 342h1v1h-1zM351 341h1v1h-1zM269 334h1v1h-1zM252 334h1v1h-1zM118 342h1v1h-1zM212 341h1v1h-1zM122 342h1v1h-1zM302 335h1v1h-1zM188 341h1v1h-1zM233 340h1v1h-1zM300 340h1v1h-1zM202 342h1v1h-1zM196 342h1v1h-1zM95 341h1v1h-1zM205 336h1v1h-1zM281 341h1v1h-1zM275 341h1v1h-1zM235 342h1v1h-1zM75 343h1v1h-1zM348 342h1v1h-1zM238 335h1v1h-1zM81 342h1v1h-1zM108 342h1v1h-1zM301 340h1v1h-1zM241 341h1v1h-1zM302 341h1v1h-1zM205 339h1v1h-1zM171 342h1v1h-1zM153 341h1v1h-1zM314 338h1v1h-1zM101 336h1v1h-1zM134 342h1v1h-1zM362 342h1v1h-1zM83 342h1v1h-1zM282 335h1v1h-1zM217 343h1v1h-1zM129 342h1v1h-1zM115 339h1v1h-1zM219 341h1v1h-1zM285 341h1v1h-1zM146 339h1v1h-1zM294 342h1v1h-1zM339 342h1v1h-1zM365 341h1v1h-1zM87 341h1v1h-1zM214 342h1v1h-1zM124 341h1v1h-1zM292 338h1v1h-1zM331 341h1v1h-1zM97 342h1v1h-1zM85 336h1v1h-1zM249 334h1v1h-1zM353 341h1v1h-1zM253 339h1v1h-1zM187 337h1v1h-1zM275 340h1v1h-1zM239 340h1v1h-1zM244 341h1v1h-1zM329 342h1v1h-1zM155 335h1v1h-1zM256 339h1v1h-1zM140 334h1v1h-1zM427 339h1v1h-1zM204 342h1v1h-1zM321 342h1v1h-1zM182 342h1v1h-1zM163 334h1v1h-1zM249 341h1v1h-1zM318 342h1v1h-1zM406 342h1v1h-1zM302 342h1v1h-1zM203 341h1v1h-1zM162 335h1v1h-1zM176 341h1v1h-1zM144 341h1v1h-1zM288 341h1v1h-1zM362 342h1v1h-1zM90 341h1v1h-1zM183 341h1v1h-1zM287 342h1v1h-1zM341 341h1v1h-1zM183 341h1v1h-1zM234 342h1v1h-1zM175 341h1v1h-1zM163 338h1v1h-1zM270 341h1v1h-1zM304 342h1v1h-1zM244 337h1v1h-1zM174 342h1v1h-1zM217 339h1v1h-1zM131 335h1v1h-1zM321 335h1v1h-1zM267 341h1v1h-1zM274 341h1v1h-1zM92 341h1v1h-1zM88 341h1v1h-1zM134 342h1v1h-1zM109 341h1v1h-1zM349 342h1v1h-1zM94 341h1v1h-1zM118 341h1v1h-1zM367 336h1v1h-1zM218 336h1v1h-1zM246 342h1v1h-1zM382 337h1v1h-1zM289 339h1v1h-1zM372 335h1v1h-1zM229 333h1v1h-1zM62 339h1v1h-1zM177 333h1v1h-1zM299 342h1v1h-1zM356 342h1v1h-1zM94 342h1v1h-1zM223 341h1v1h-1zM304 335h1v1h-1zM102 340h1v1h-1zM264 341h1v1h-1zM315 341h1v1h-1zM351 341h1v1h-1zM418 337h1v1h-1zM126 341h1v1h-1zM184 341h1v1h-1zM112 341h1v1h-1zM349 342h1v1h-1zM300 341h1v1h-1zM277 341h1v1h-1zM317 342h1v1h-1zM145 341h1v1h-1zM206 341h1v1h-1zM364 341h1v1h-1zM94 333h1v1h-1zM97 342h1v1h-1zM261 340h1v1h-1zM247 342h1v1h-1zM360 337h1v1h-1zM103 341h1v1h-1zM250 342h1v1h-1zM159 341h1v1h-1zM317 334h1v1h-1zM182 340h1v1h-1zM233 342h1v1h-1zM255 341h1v1h-1zM228 343h1v1h-1zM367 342h1v1h-1zM197 340h1v1h-1zM293 341h1v1h-1zM142 343h1v1h-1zM60 342h1v1h-1zM182 342h1v1h-1zM373 339h1v1h-1zM271 341h1v1h-1zM269 341h1v1h-1zM111 338h1v1h-1zM78 341h1v1h-1zM149 336h1v1h-1zM123 340h1v1h-1zM315 336h1v1h-1zM259 340h1v1h-1zM201 342h1v1h-1zM371 341h1v1h-1zM176 342h1v1h-1zM335 342h1v1h-1zM348 340h1v1h-1zM266 336h1v1h-1zM315 340h1v1h-1zM215 340h1v1h-1zM317 340h1v1h-1zM143 343h1v1h-1zM427 342h1v1h-1zM97 335h1v1h-1zM124 342h1v1h-1zM358 342h1v1h-1zM368 342h1v1h-1zM114 340h1v1h-1zM129 342h1v1h-1zM85 341h1v1h-1zM320 342h1v1h-1zM265 342h1v1h-1zM87 337h1v1h-1zM250 341h1v1h-1zM87 341h1v1h-1zM184 339h1v1h-1zM210 341h1v1h-1zM158 342h1v1h-1zM401 335h1v1h-1zM167 342h1v1h-1zM108 341h1v1h-1zM311 341h1v1h-1zM110 341h1v1h-1zM263 340h1v1h-1zM430 341h1v1h-1zM248 342h1v1h-1zM172 342h1v1h-1zM355 341h1v1h-1zM110 335h1v1h-1zM366 342h1v1h-1zM88 341h1v1h-1zM269 333h1v1h-1zM283 340h1v1h-1zM163 342h1v1h-1zM174 341h1v1h-1zM304 341h1v1h-1zM124 342h1v1h-1zM139 341h1v1h-1zM191 342h1v1h-1zM199 341h1v1h-1zM150 343h1v1h-1zM288 340h1v1h-1zM204 341h1v1h-1zM365 339h1v1h-1zM264 342h1v1h-1zM125 341h1v1h-1zM214 341h1v1h-1zM334 342h1v1h-1zM280 340h1v1h-1zM325 342h1v1h-1zM123 341h1v1h-1zM64 342h1v1h-1zM83 341h1v1h-1zM90 342h1v1h-1zM289 342h1v1h-1zM379 337h1v1h-1zM162 336h1v1h-1zM70 343h1v1h-1zM96 335h1v1h-1zM354 341h1v1h-1zM226 342h1v1h-1zM296 341h1v1h-1zM370 341h1v1h-1zM325 339h1v1h-1zM283 337h1v1h-1zM110 341h1v1h-1zM315 339h1v1h-1zM103 341h1v1h-1zM335 340h1v1h-1zM330 342h1v1h-1zM60 341h1v1h-1zM175 342h1v1h-1zM83 342h1v1h-1zM288 337h1v1h-1zM130 342h1v1h-1zM367 339h1v1h-1zM215 341h1v1h-1zM364 342h1v1h-1zM306 343h1v1h-1zM150 338h1v1h-1zM128 342h1v1h-1zM190 342h1v1h-1zM356 342h1v1h-1zM325 342h1v1h-1zM249 333h1v1h-1zM111 334h1v1h-1zM269 341h1v1h-1zM61 343h1v1h-1zM69 340h1v1h-1zM362 339h1v1h-1zM188 335h1v1h-1zM334 343h1v1h-1zM318 342h1v1h-1zM281 341h1v1h-1zM124 342h1v1h-1zM178 341h1v1h-1zM73 339h1v1h-1zM195 341h1v1h-1zM359 341h1v1h-1zM306 341h1v1h-1zM270 341h1v1h-1zM417 341h1v1h-1zM279 343h1v1h-1zM209 341h1v1h-1zM428 335h1v1h-1zM366 341h1v1h-1zM200 341h1v1h-1zM107 341h1v1h-1zM265 334h1v1h-1zM118 338h1v1h-1zM172 342h1v1h-1zM309 341h1v1h-1zM90 341h1v1h-1zM70 341h1v1h-1zM277 342h1v1h-1zM71 343h1v1h-1zM133 336h1v1h-1zM135 342h1v1h-1zM291 340h1v1h-1zM342 335h1v1h-1zM355 341h1v1h-1zM296 342h1v1h-1zM175 337h1v1h-1zM378 342h1v1h-1zM360 341h1v1h-1zM242 342h1v1h-1zM134 342h1v1h-1zM214 333h1v1h-1zM168 341h1v1h-1zM244 342h1v1h-1zM228 341h1v1h-1zM172 340h1v1h-1zM274 341h1v1h-1zM185 336h1v1h-1zM435 333h1v1h-1zM209 341h1v1h-1zM90 341h1v1h-1zM260 341h1v1h-1zM109 342h1v1h-1zM235 341h1v1h-1zM175 341h1v1h-1zM250 338h1v1h-1zM108 334h1v1h-1zM116 340h1v1h-1zM369 341h1v1h-1zM166 341h1v1h-1zM276 341h1v1h-1zM101 341h1v1h-1zM190 342h1v1h-1zM182 341h1v1h-1zM84 341h1v1h-1zM153 341h1v1h-1zM334 341h1v1h-1zM292 342h1v1h-1zM268 335h1v1h-1zM330 342h1v1h-1zM73 342h1v1h-1zM350 341h1v1h-1zM222 341h1v1h-1zM148 342h1v1h-1zM105 342h1v1h-1zM243 339h1v1h-1zM214 341h1v1h-1zM306 341h1v1h-1zM216 342h1v1h-1zM352 341h1v1h-1zM68 341h1v1h-1zM200 341h1v1h-1zM110 342h1v1h-1zM114 342h1v1h-1zM364 342h1v1h-1zM385 341h1v1h-1zM357 341h1v1h-1zM316 342h1v1h-1zM322 341h1v1h-1zM169 341h1v1h-1zM291 341h1v1h-1zM320 342h1v1h-1zM261 342h1v1h-1zM269 338h1v1h-1zM240 341h1v1h-1zM350 335h1v1h-1zM345 342h1v1h-1zM304 341h1v1h-1zM71 343h1v1h-1zM270 341h1v1h-1zM219 342h1v1h-1zM326 342h1v1h-1zM229 341h1v1h-1zM337 342h1v1h-1zM397 342h1v1h-1zM73 341h1v1h-1zM145 342h1v1h-1zM256 342h1v1h-1zM221 341h1v1h-1zM247 341h1v1h-1zM200 340h1v1h-1zM431 342h1v1h-1zM95 335h1v1h-1zM259 340h1v1h-1zM259 341h1v1h-1zM277 341h1v1h-1zM73 342h1v1h-1zM225 341h1v1h-1zM256 335h1v1h-1zM323 336h1v1h-1zM333 338h1v1h-1zM211 336h1v1h-1zM141 336h1v1h-1zM398 341h1v1h-1zM144 342h1v1h-1z"/><path fill="#e0e040" d="M375 330h1v1h-1zM227 337h1v1h-1zM358 342h1v1h-1zM141 333h1v1h-1zM290 337h1v1h-1zM112 335h1v1h-1zM368 333h1v1h-1zM245 340h1v1h-1zM310 334h1v1h-1zM344 338h1v1h-1zM233 332h1v1h-1zM260 336h1v1h-1zM314 329h1v1h-1zM301 332h1v1h-1zM155 334h1v1h-1zM218 342h1v1h-1zM417 334h1v1h-1zM74 334h1v1h-1zM309 332h1v1h-1zM253 332h1v1h-1zM420 331h1v1h-1zM188 334h1v1h-1zM418 336h1v1h-1zM372 341h1v1h-1zM172 330h1v1h-1zM231 331h1v1h-1zM188 331h1v1h-1zM352 333h1v1h-1zM151 330h1v1h-1zM196 337h1v1h-1zM145 334h1v1h-1zM316 335h1v1h-1zM275 341h1v1h-1zM320 340h1v1h-1zM151 340h1v1h-1zM137 341h1v1h-1zM275 342h1v1h-1zM172 333h1v1h-1zM78 333h1v1h-1zM380 334h1v1h-1zM180 335h1v1h-1zM132 338h1v1h-1zM284 337h1v1h-1zM325 338h1v1h-1zM228 333h1v1h-1zM334 333h1v1h-1zM201 338h1v1h-1zM64 338h1v1h-1zM95 335h1v1h-1zM173 332h1v1h-1zM85 335h1v1h-1zM343 337h1v1h-1zM109 339h1v1h-1zM332 340h1v1h-1zM203 332h1v1h-1zM73 338h1v1h-1zM142 331h1v1h-1zM152 337h1v1h-1zM262 336h1v1h-1zM366 332h1v1h-1zM69 334h1v1h-1zM82 331h1v1h-1zM396 331h1v1h-1zM272 339h1v1h-1zM191 336h1v1h-1zM222 331h1v1h-1zM137 337h1v1h-1zM85 341h1v1h-1zM326 342h1v1h-1zM175 341h1v1h-1zM350 329h1v1h-1zM98 342h1v1h-1zM239 329h1v1h-1zM128 340h1v1h-1zM349 336h1v1h-1zM272 332h1v1h-1zM79 337h1v1h-1zM172 341h1v1h-1zM90 334h1v1h-1zM74 331h1v1h-1zM189 334h1v1h-1zM147 335h1v1h-1zM364 342h1v1h-1zM80 329h1v1h-1zM372 340h1v1h-1zM235 333h1v1h-1zM229 337h1v1h-1zM101 341h1v1h-1zM211 338h1v1h-1zM253 331h1v1h-1zM341 335h1v1h-1zM194 335h1v1h-1zM399 333h1v1h-1zM118 333h1v1h-1zM198 330h1v1h-1zM316 332h1v1h-1zM66 338h1v1h-1zM105 330h1v1h-1zM115 334h1v1h-1zM312 331h1v1h-1zM195 338h1v1h-1zM278 336h1v1h-1zM405 338h1v1h-1zM317 337h1v1h-1zM280 332h1v1h-1zM258 334h1v1h-1zM225 335h1v1h-1zM258 342h1v1h-1zM218 340h1v1h-1zM175 330h1v1h-1zM274 339h1v1h-1zM66 341h1v1h-1zM180 335h1v1h-1zM127 335h1v1h-1zM341 329h1v1h-1zM430 336h1v1h-1zM186 330h1v1h-1zM169 332h1v1h-1zM283 333h1v1h-1zM76 341h1v1h-1zM133 333h1v1h-1zM188 337h1v1h-1zM64 338h1v1h-1zM403 340h1v1h-1zM71 330h1v1h-1zM124 333h1v1h-1zM240 336h1v1h-1zM330 333h1v1h-1zM241 337h1v1h-1zM162 342h1v1h-1zM178 329h1v1h-1zM407 340h1v1h-1zM325 334h1v1h-1zM320 342h1v1h-1zM161 331h1v1h-1zM157 334h1v1h-1zM238 337h1v1h-1zM141 331h1v1h-1zM86 336h1v1h-1zM400 331h1v1h-1zM255 332h1v1h-1zM136 342h1v1h-1zM204 340h1v1h-1zM257 331h1v1h-1zM220 331h1v1h-1z"/><path fill="#c8d030" d="M294 337h1v1h-1zM176 341h1v1h-1zM342 339h1v1h-1zM92 335h1v1h-1zM153 337h1v1h-1zM163 335h1v1h-1zM246 339h1v1h-1zM77 339h1v1h-1zM60 337h1v1h-1zM204 340h1v1h-1zM120 330h1v1h-1zM200 337h1v1h-1zM269 332h1v1h-1zM96 336h1v1h-1zM95 329h1v1h-1zM262 339h1v1h-1zM272 338h1v1h-1zM259 335h1v1h-1zM303 330h1v1h-1zM237 330h1v1h-1zM195 336h1v1h-1zM190 337h1v1h-1zM65 337h1v1h-1zM105 331h1v1h-1zM293 337h1v1h-1zM87 334h1v1h-1zM351 334h1v1h-1zM326 333h1v1h-1zM97 334h1v1h-1zM422 340h1v1h-1zM284 339h1v1h-1zM246 340h1v1h-1zM67 339h1v1h-1zM320 330h1v1h-1zM103 330h1v1h-1zM296 334h1v1h-1zM271 331h1v1h-1zM349 341h1v1h-1zM282 333h1v1h-1zM186 329h1v1h-1zM60 336h1v1h-1zM175 336h1v1h-1zM90 338h1v1h-1zM74 340h1v1h-1zM258 335h1v1h-1zM236 340h1v1h-1zM116 340h1v1h-1zM155 340h1v1h-1zM283 332h1v1h-1zM139 339h1v1h-1zM94 338h1v1h-1zM132 330h1v1h-1zM334 331h1v1h-1zM238 338h1v1h-1zM118 331h1v1h-1zM328 331h1v1h-1zM164 335h1v1h-1zM188 332h1v1h-1zM261 337h1v1h-1zM356 332h1v1h-1zM196 338h1v1h-1zM157 340h1v1h-1zM310 340h1v1h-1zM291 331h1v1h-1zM102 337h1v1h-1zM127 332h1v1h-1zM358 332h1v1h-1zM254 336h1v1h-1zM141 332h1v1h-1zM173 331h1v1h-1zM323 331h1v1h-1zM81 335h1v1h-1zM277 336h1v1h-1zM195 331h1v1h-1zM318 341h1v1h-1zM224 331h1v1h-1zM231 341h1v1h-1zM287 330h1v1h-1zM97 335h1v1h-1zM162 330h1v1h-1zM131 338h1v1h-1zM139 330h1v1h-1zM288 335h1v1h-1zM86 336h1v1h-1zM304 338h1v1h-1zM374 335h1v1h-1zM285 340h1v1h-1zM313 338h1v1h-1zM288 340h1v1h-1zM181 332h1v1h-1zM202 337h1v1h-1zM302 331h1v1h-1zM266 342h1v1h-1zM105 338h1v1h-1zM312 341h1v1h-1zM79 337h1v1h-1zM379 335h1v1h-1zM137 335h1v1h-1zM383 341h1v1h-1zM135 337h1v1h-1zM93 338h1v1h-1zM73 338h1v1h-1zM222 332h1v1h-1zM326 331h1v1h-1zM181 338h1v1h-1zM198 330h1v1h-1zM320 332h1v1h-1zM316 332h1v1h-1zM218 336h1v1h-1zM301 334h1v1h-1zM141 335h1v1h-1zM162 331h1v1h-1zM68 339h1v1h-1zM67 332h1v1h-1zM137 337h1v1h-1zM182 337h1v1h-1zM84 340h1v1h-1zM274 341h1v1h-1zM235 337h1v1h-1zM279 336h1v1h-1zM302 333h1v1h-1zM77 341h1v1h-1zM275 333h1v1h-1zM160 336h1v1h-1zM154 334h1v1h-1zM174 336h1v1h-1zM164 338h1v1h-1zM372 335h1v1h-1zM350 336h1v1h-1zM326 337h1v1h-1zM321 335h1v1h-1zM268 330h1v1h-1zM295 333h1v1h-1zM344 340h1v1h-1zM239 341h1v1h-1z"/><rect x="58" y="344" width="370" height="2" fill="#a82020"/><rect x="58" y="342" width="320" height="1" fill="#30e030" opacity="0.45"/><rect x="56" y="148" width="2" height="199" fill="#000"/><rect x="56" y="346" width="390" height="1" fill="#000"/></svg>
<div class="t" style="left:58px;top:138px;font-size:11px;line-height:11px;-webkit-text-stroke:0">ms</div>

<div class="t" style="left:0;width:54px;text-align:right;top:323px;font-size:12px;letter-spacing:-0.8px;color:#222;-webkit-text-stroke:0">0.100</div>
<div class="t" style="left:0;width:54px;text-align:right;top:303px;font-size:12px;letter-spacing:-0.8px;color:#222;-webkit-text-stroke:0">0.200</div>
<div class="t" style="left:0;width:54px;text-align:right;top:283px;font-size:12px;letter-spacing:-0.8px;color:#222;-webkit-text-stroke:0">0.300</div>
<div class="t" style="left:0;width:54px;text-align:right;top:264px;font-size:12px;letter-spacing:-0.8px;color:#222;-webkit-text-stroke:0">0.400</div>
<div class="t" style="left:0;width:54px;text-align:right;top:244px;font-size:12px;letter-spacing:-0.8px;color:#222;-webkit-text-stroke:0">0.500</div>
<div class="t" style="left:0;width:54px;text-align:right;top:224px;font-size:12px;letter-spacing:-0.8px;color:#222;-webkit-text-stroke:0">0.600</div>
<div class="t" style="left:0;width:54px;text-align:right;top:205px;font-size:12px;letter-spacing:-0.8px;color:#222;-webkit-text-stroke:0">0.700</div>
<div class="t" style="left:0;width:54px;text-align:right;top:185px;font-size:12px;letter-spacing:-0.8px;color:#222;-webkit-text-stroke:0">0.800</div>
<div class="t" style="left:0;width:54px;text-align:right;top:165px;font-size:12px;letter-spacing:-0.8px;color:#222;-webkit-text-stroke:0">0.900</div>
<div class="t" style="left:0;width:54px;text-align:right;top:145px;font-size:12px;letter-spacing:-0.8px;color:#222;-webkit-text-stroke:0">1.00</div>
<div class="t" style="left:44px;width:30px;text-align:center;top:352px;font-size:12px;letter-spacing:-0.7px;color:#222;-webkit-text-stroke:0">0</div>
<div class="t" style="left:82px;width:30px;text-align:center;top:352px;font-size:12px;letter-spacing:-0.7px;color:#222;-webkit-text-stroke:0">2</div>
<div class="t" style="left:121px;width:30px;text-align:center;top:352px;font-size:12px;letter-spacing:-0.7px;color:#222;-webkit-text-stroke:0">5</div>
<div class="t" style="left:159px;width:30px;text-align:center;top:352px;font-size:12px;letter-spacing:-0.7px;color:#222;-webkit-text-stroke:0">7</div>
<div class="t" style="left:198px;width:30px;text-align:center;top:352px;font-size:12px;letter-spacing:-0.7px;color:#222;-webkit-text-stroke:0">10</div>
<div class="t" style="left:236px;width:30px;text-align:center;top:352px;font-size:12px;letter-spacing:-0.7px;color:#222;-webkit-text-stroke:0">12</div>
<div class="t" style="left:275px;width:30px;text-align:center;top:352px;font-size:12px;letter-spacing:-0.7px;color:#222;-webkit-text-stroke:0">15</div>
<div class="t" style="left:314px;width:30px;text-align:center;top:352px;font-size:12px;letter-spacing:-0.7px;color:#222;-webkit-text-stroke:0">17</div>
<div class="t" style="left:352px;width:30px;text-align:center;top:352px;font-size:12px;letter-spacing:-0.7px;color:#222;-webkit-text-stroke:0">20</div>
<div class="t" style="left:391px;width:30px;text-align:center;top:352px;font-size:12px;letter-spacing:-0.7px;color:#222;-webkit-text-stroke:0">22</div>
<div class="t" style="left:432px;top:352px;font-size:12px;letter-spacing:-0.7px;color:#222;-webkit-text-stroke:0">25gB</div>

<!-- right controls -->
<div class="a" style="left:479px;top:146px;width:73px;height:19px;border:1px solid #3c8cc8;border-radius:3px;background:linear-gradient(#eef4f8 0%,#e2ecf2 48%,#d0e0ea 52%,#c4d8e4 100%);box-shadow:inset 0 0 0 1px #7ed0f4"></div>
<div class="t" style="left:503px;top:150px">开始</div>
<div class="sep" style="left:470px;top:175px;width:101px"></div>
<div class="a" style="left:475px;top:182px;width:12px;height:12px;border-radius:50%;border:1px solid #4a6a8a;background:radial-gradient(circle,#2a6ab0 0 2.2px,#7ab0e0 3.2px,#dce8f0 4px)"></div>
<div class="t" style="left:491px;top:182px">读取</div>
<div class="a" style="left:475px;top:197px;width:12px;height:12px;border-radius:50%;border:1px solid #8a8a8a;background:radial-gradient(circle at 40% 40%,#fff,#d0d0d0)"></div>
<div class="t" style="left:491px;top:197px">写入</div>
<div class="sep" style="left:470px;top:211px;width:101px"></div>
<div class="chk" style="left:475px;top:219px"></div>
<div class="t" style="left:491px;top:219px">快捷行程</div>
<div class="a" style="left:475px;top:237px;width:62px;height:18px;border:1px solid #c8c8c8;background:#fff"></div>
<div class="t" style="left:477px;top:241px;font-size:12px;color:#8a8a8a">40</div>
<div class="a" style="left:520px;top:238px;width:16px;height:16px;border:1px solid #d8d8d8;background:linear-gradient(#f4f4f4,#e4e4e4)"></div>
<div class="a" style="left:520px;top:245px;width:16px;height:1px;background:#d0d0d0"></div>
<svg class="a" style="left:525px;top:240px" width="7" height="12"><path d="M1 4h5L3.5 1.5z M1 8h5L3.5 10.5z" fill="#b0b0b0"/></svg>
<div class="t mono" style="left:548px;top:242px;font-size:11px;letter-spacing:-0.6px;-webkit-text-stroke:0.15px">gB</div>
<div class="sep" style="left:470px;top:264px;width:99px"></div>
<div class="chk" style="left:475px;top:274px"></div>
<svg class="a" style="left:476px;top:275px" width="11" height="11"><path d="M2 5.5l2.5 3.5 5-8" stroke="#3a4878" stroke-width="1.7" fill="none"/></svg>
<div class="t" style="left:491px;top:276px"><span class="mono" style="font-size:11px;letter-spacing:-0.6px;-webkit-text-stroke:0.15px">4 KB </span>对齐</div>

<!-- table -->
<div class="t" style="left:48px;top:371px;font-weight:bold;font-size:12.5px;-webkit-text-stroke:0">传输数据大小</div>
<div class="t" style="left:166px;top:371px;font-weight:bold;font-size:12.5px;-webkit-text-stroke:0">操作<span style="font-family:'Liberation Mono';font-size:12px;letter-spacing:-0.5px">/</span>秒</div>
<div class="t" style="left:260px;top:371px;font-weight:bold;font-size:12.5px;-webkit-text-stroke:0">平均存取时间</div>
<div class="t" style="left:375px;top:371px;font-weight:bold;font-size:12.5px;-webkit-text-stroke:0">最大存取时间</div>
<div class="t" style="left:495px;top:371px;font-weight:bold;font-size:12.5px;-webkit-text-stroke:0">平均速度</div>
<div class="a" style="left:43px;top:384px;width:521px;height:2px;background:#707070"></div>
<div class="a" style="left:133px;top:370px;width:2px;height:95px;background:#707070"></div>
<div class="a" style="left:242px;top:370px;width:2px;height:95px;background:#707070"></div>
<div class="a" style="left:357px;top:370px;width:2px;height:95px;background:#707070"></div>
<div class="a" style="left:467px;top:370px;width:2px;height:95px;background:#707070"></div>

<div class="a" style="left:28px;top:392px;width:8px;height:8px;background:#ffff00;border:1px solid #101010"></div>
<div class="chk" style="left:43px;top:389px"></div>
<svg class="a" style="left:44px;top:390px" width="11" height="11"><path d="M2 5.5l2.5 3.5 5-8" stroke="#3a4878" stroke-width="1.7" fill="none"/></svg>
<div class="t" style="left:59px;top:391px"><span class="mono" style="font-size:11px;letter-spacing:-0.6px;-webkit-text-stroke:0.15px">512 </span>字节</div>
<div class="num" style="right:461px;top:390px">49261 IOPS</div>
<div class="num" style="right:350px;top:390px">0.020 <span style="font-size:11px;letter-spacing:0.6px">ms</span></div>
<div class="num" style="right:240px;top:390px">0.614 <span style="font-size:11px;letter-spacing:0.6px">ms</span></div>
<div class="num" style="right:133px;top:390px">24.053 MB/秒</div>
<div class="a" style="left:28px;top:407px;width:8px;height:8px;background:#f00000;border:1px solid #101010"></div>
<div class="chk" style="left:43px;top:404px"></div>
<svg class="a" style="left:44px;top:405px" width="11" height="11"><path d="M2 5.5l2.5 3.5 5-8" stroke="#3a4878" stroke-width="1.7" fill="none"/></svg>
<div class="t mono" style="left:59px;top:406px;font-size:11px;letter-spacing:-0.6px;-webkit-text-stroke:0.15px">4 KB</div>
<div class="num" style="right:461px;top:405px">57418 IOPS</div>
<div class="num" style="right:350px;top:405px">0.017 <span style="font-size:11px;letter-spacing:0.6px">ms</span></div>
<div class="num" style="right:240px;top:405px">0.491 <span style="font-size:11px;letter-spacing:0.6px">ms</span></div>
<div class="num" style="right:133px;top:405px">224.291 MB/</div>
<div class="a" style="left:28px;top:422px;width:8px;height:8px;background:#20d020;border:1px solid #101010"></div>
<div class="chk" style="left:43px;top:419px"></div>
<svg class="a" style="left:44px;top:420px" width="11" height="11"><path d="M2 5.5l2.5 3.5 5-8" stroke="#3a4878" stroke-width="1.7" fill="none"/></svg>
<div class="t mono" style="left:59px;top:421px;font-size:11px;letter-spacing:-0.6px;-webkit-text-stroke:0.15px">64 KB</div>
<div class="num" style="right:461px;top:420px">37305 IOPS</div>
<div class="num" style="right:350px;top:420px">0.026 <span style="font-size:11px;letter-spacing:0.6px">ms</span></div>
<div class="num" style="right:240px;top:420px">0.643 <span style="font-size:11px;letter-spacing:0.6px">ms</span></div>
<div class="num" style="right:133px;top:420px">2331.568 MB/</div>
<div class="a" style="left:28px;top:439px;width:8px;height:8px;background:#2070e0;border:1px solid #101010"></div>
<div class="chk" style="left:43px;top:436px"></div>
<svg class="a" style="left:44px;top:437px" width="11" height="11"><path d="M2 5.5l2.5 3.5 5-8" stroke="#3a4878" stroke-width="1.7" fill="none"/></svg>
<div class="t mono" style="left:59px;top:438px;font-size:11px;letter-spacing:-0.6px;-webkit-text-stroke:0.15px">1 MB</div>
<div class="num" style="right:461px;top:437px">5196 IOPS</div>
<div class="num" style="right:350px;top:437px">0.192 <span style="font-size:11px;letter-spacing:0.6px">ms</span></div>
<div class="num" style="right:240px;top:437px">0.782 <span style="font-size:11px;letter-spacing:0.6px">ms</span></div>
<div class="num" style="right:133px;top:437px">5196.371 MB/</div>
<div class="a" style="left:28px;top:455px;width:8px;height:8px;background:#20f0f0;border:1px solid #101010"></div>
<div class="chk" style="left:43px;top:452px"></div>
<svg class="a" style="left:44px;top:453px" width="11" height="11"><path d="M2 5.5l2.5 3.5 5-8" stroke="#3a4878" stroke-width="1.7" fill="none"/></svg>
<div class="t" style="left:59px;top:452px">随机</div>
<div class="num" style="right:461px;top:453px">9351 IOPS</div>
<div class="num" style="right:350px;top:453px">0.106 <span style="font-size:11px;letter-spacing:0.6px">ms</span></div>
<div class="num" style="right:240px;top:453px">0.747 <span style="font-size:11px;letter-spacing:0.6px">ms</span></div>
<div class="num" style="right:133px;top:453px">4745.140 MB/</div>


<!-- watermark -->
<svg class="a" style="left:520px;top:526px" width="70" height="52" viewBox="0 0 70 52" style="opacity:.95">
 <g fill="none" stroke="#fff" stroke-linecap="round" stroke-linejoin="round" filter="url(#wsh)">
  <path d="M6 26 L36 6 L58 20" stroke-width="6"/>
  <path d="M20 30 Q30 20 42 24 Q50 30 40 36 Q28 42 34 48 L52 46" stroke-width="6"/>
  <path d="M44 30 L60 30" stroke-width="5"/>
 </g>
 <defs><filter id="wsh" x="-10%" y="-10%" width="120%" height="120%"><feDropShadow dx="0" dy="0" stdDeviation="0.6" flood-color="#000" flood-opacity=".18"/></filter></defs>
</svg>
<div class="t" style="left:580px;top:536px;font-size:24px;line-height:24px;font-weight:bold;color:#fff;text-shadow:0 0 1px rgba(0,0,0,.22);letter-spacing:0px">系统之家</div>
<div class="t" style="left:580px;top:565px;font-family:'Liberation Serif',serif;font-size:9px;line-height:9px;font-weight:bold;color:#fff;text-shadow:0 0 1px rgba(0,0,0,.2);letter-spacing:0.65px">XITONGZHIJIA.NET</div>

</body></html>
